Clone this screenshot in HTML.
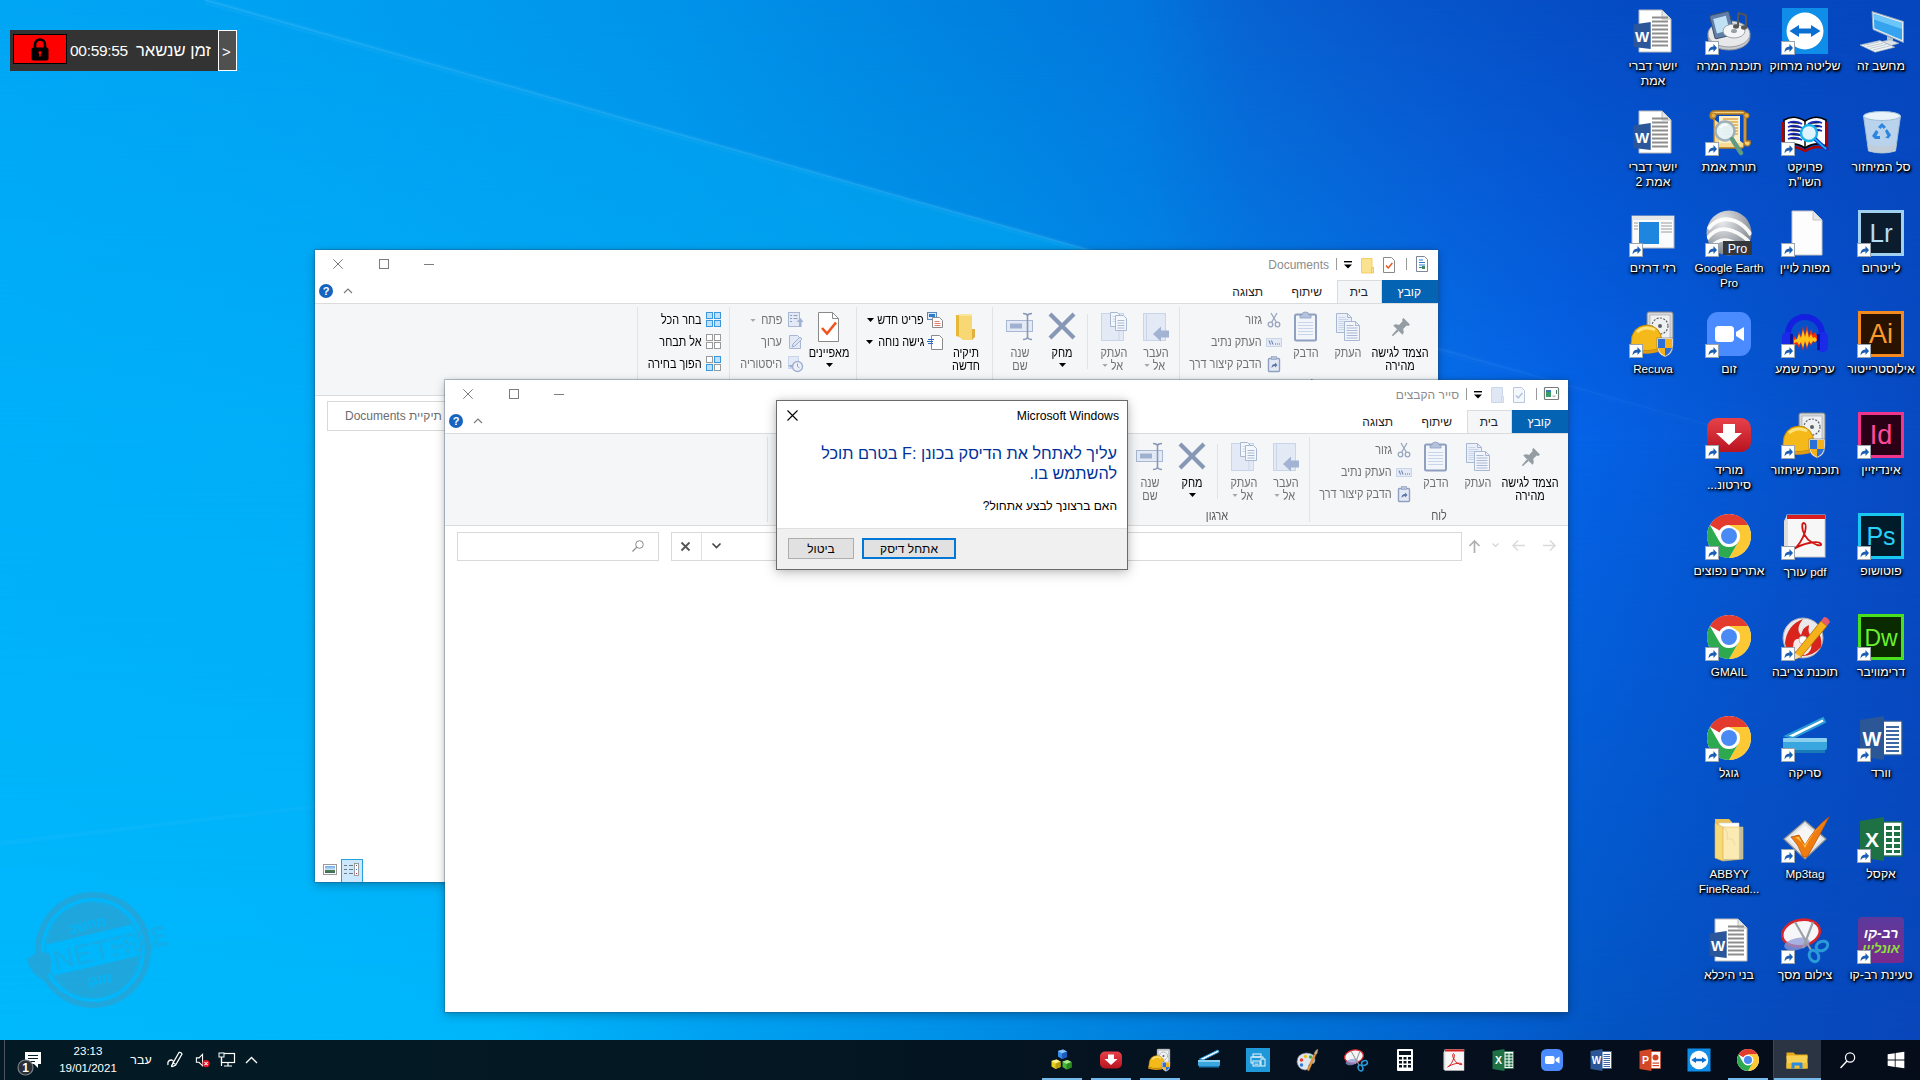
<!DOCTYPE html>
<html lang="he"><head><meta charset="utf-8"><title>Desktop</title><style>
*{box-sizing:border-box;margin:0;padding:0}
html,body{width:1920px;height:1080px;overflow:hidden}
body{font-family:"Liberation Sans",sans-serif;font-size:12px;position:relative;
 background:#0078d7;}
.abs{position:absolute}
#wall{position:absolute;left:0;top:0;width:1920px;height:1080px;background:linear-gradient(to right,rgb(0,166,244) 0px,rgb(0,162,242) 240px,rgb(0,148,235) 670px,rgb(0,130,224) 960px,rgb(3,118,220) 1140px,rgb(8,98,210) 1250px,rgb(8,86,203) 1400px,rgb(5,76,196) 1600px,rgb(6,70,190) 1920px)}
#wall2{position:absolute;left:0;top:0;width:1920px;height:1080px;background:linear-gradient(to right,rgb(0,176,249) 0px,rgb(0,174,248) 315px,rgb(0,160,240) 700px,rgb(0,150,236) 1000px,rgb(2,126,232) 1300px,rgb(6,112,236) 1440px,rgb(5,100,232) 1570px,rgb(6,86,210) 1750px,rgb(8,74,194) 1920px);-webkit-mask-image:linear-gradient(to bottom,transparent 0px,#000 440px);mask-image:linear-gradient(to bottom,transparent 0px,#000 440px)}
#wall3{position:absolute;left:0;top:0;width:1920px;height:1080px;background:linear-gradient(to right,rgb(0,184,252) 0px,rgb(0,182,251) 500px,rgb(0,162,241) 700px,rgb(0,148,234) 900px,rgb(0,132,224) 1100px,rgb(0,114,214) 1300px,rgb(3,95,205) 1500px,rgb(3,85,195) 1600px,rgb(6,76,190) 1750px,rgb(8,70,186) 1920px);-webkit-mask-image:linear-gradient(to bottom,transparent 440px,#000 1040px);mask-image:linear-gradient(to bottom,transparent 440px,#000 1040px)}
.t{position:absolute;white-space:nowrap;line-height:1}
.rtl{direction:rtl}
svg{position:absolute;overflow:visible}
/* explorer windows */
.win{position:absolute;background:#fff;}
.win .rib{position:absolute;left:0;right:0;top:53px;height:93px;background:#f5f6f7;border-top:1px solid #dadbdc;border-bottom:1px solid #dadbdc}
.win .filetab{position:absolute;right:0;top:30px;width:56px;height:23px;background:#0563b4}
.win .hometab{position:absolute;right:56px;top:30px;width:45px;height:24px;background:#f5f6f7;border:1px solid #dadbdc;border-bottom:none}
.sep{position:absolute;width:1px;background:#e2e3e4}
.box{position:absolute;border:1px solid #d9d9d9;background:#fff}

.dl{position:absolute;width:100px;text-align:center;color:#fff;font-size:12.3px;line-height:15px;direction:rtl;
 text-shadow:1px 1px 1px rgba(0,0,0,1),0 1px 3px rgba(0,0,0,0.95),0 0 4px rgba(0,0,0,0.8),1px 2px 2px rgba(0,0,0,0.7);white-space:nowrap}
.la{font-size:11.7px}
.dl.la{font-size:11.7px}

#tb{position:absolute;left:0;top:1040px;width:1920px;height:40px;
 background:linear-gradient(to right,#031a25 0px,#031924 400px,#041722 800px,#05121f 1200px,#050e1c 1600px,#050c1a 1920px)}
.run{position:absolute;top:38px;height:2px;width:40px;background:#76b9ed}

.rl{position:absolute;white-space:nowrap;font-size:13px;line-height:13px;text-align:center;direction:rtl;width:90px;transform:scaleX(.835);transform-origin:50% 50%}
.rs{position:absolute;white-space:nowrap;font-size:13px;line-height:14px;direction:rtl;text-align:right;transform:scaleX(.835);transform-origin:100% 50%}
.en{color:#000}.dis{color:#707070}
.gl{position:absolute;white-space:nowrap;font-size:13px;line-height:14px;color:#5a5a5a;width:80px;text-align:center;direction:rtl;transform:scaleX(.835);transform-origin:50% 50%}
</style></head><body><div id="wall"></div><div id="wall2"></div><div id="wall3"></div>
<svg style="left:0;top:0" width="1920" height="1080" viewBox="0 0 1920 1080">
 <defs>
  <linearGradient id="ray1" gradientUnits="userSpaceOnUse" x1="205" y1="0" x2="1920" y2="485">
   <stop offset="0" stop-color="#8fd8ff" stop-opacity="0.15"/>
   <stop offset="0.5" stop-color="#8fd8ff" stop-opacity="0.14"/>
   <stop offset="0.72" stop-color="#6fb8ff" stop-opacity="0.10"/>
   <stop offset="0.85" stop-color="#6fb8ff" stop-opacity="0.04"/>
   <stop offset="1" stop-color="#6fb8ff" stop-opacity="0"/>
  </linearGradient>
  <linearGradient id="lite" gradientUnits="userSpaceOnUse" x1="250" y1="0" x2="1100" y2="0">
   <stop offset="0" stop-color="#00c8ff" stop-opacity="0"/>
   <stop offset="0.65" stop-color="#00c8ff" stop-opacity="0.22"/>
   <stop offset="1" stop-color="#00c8ff" stop-opacity="0.30"/>
  </linearGradient>
 </defs>
 <polygon points="0,0 205,0 1110,256 1110,262 0,262" fill="url(#lite)"/>
 <line x1="205" y1="0" x2="1920" y2="485" stroke="url(#ray1)" stroke-width="1.6"/>
 <line x1="205" y1="1" x2="1920" y2="486" stroke="url(#ray1)" stroke-width="7" opacity="0.35"/>
 <polygon points="0,841 320,804 320,808 0,846" fill="#8fe0ff" opacity="0.05"/>
</svg>
<svg style="left:0px;top:860px" width="240" height="180" viewBox="0 860 240 180" opacity="0.25">
 <g transform="rotate(-13 93 950)" fill="#7d7a82" stroke="none">
  <path d="M93 892 a58 58 0 1 0 0.01 0z M93 898 a52 52 0 1 1 -0.01 0z" fill-rule="evenodd"/>
  <path d="M93 901.500 a48.500 48.500 0 1 0 0.01 0z M93 903 a47 47 0 1 1 -0.01 0z" fill-rule="evenodd"/>
  <path d="M49.500 934 A46 46 0 0 1 136.500 934 Z"/>
  <path d="M49.500 966 A46 46 0 0 0 136.500 966 Z"/>
  <path d="M27 944 q12 -7 23 0 q1 16 -11 25 q-13 -9 -12 -25z"/>
  <text x="52" y="961" font-family="Liberation Sans" font-size="27" fill-opacity="0.75" textLength="58" lengthAdjust="spacingAndGlyphs">NET</text>
  <text x="111" y="961" font-family="Liberation Sans" font-size="27" textLength="56" lengthAdjust="spacingAndGlyphs" fill="none" stroke="#7d7a82" stroke-width="0.9">FREE</text>
 </g>
 <g transform="rotate(-13 93 950)" fill="#00b3f8" font-family="Liberation Sans" font-weight="bold" font-size="13.500">
  <text x="93" y="929" text-anchor="middle" direction="rtl">מחשב</text>
  <text x="93" y="985" text-anchor="middle" direction="rtl">מוגן</text>
 </g>
</svg>
<div class="abs" style="left:10px;top:30px;width:227px;height:41px;background:#333">
 <div class="abs" style="left:3px;top:4px;width:54px;height:30px;background:#fe0000;border:1px solid #000"></div>
 <svg style="left:20px;top:7px" width="20" height="24" viewBox="0 0 20 24"><path d="M5 11 V7.5 a5 5 0 0 1 10 0 V11" fill="none" stroke="#000" stroke-width="2.6"/><rect x="1.5" y="10.5" width="17" height="13" rx="2" fill="#000"/><circle cx="10" cy="15.6" r="1.6" fill="#fe0000"/><rect x="9.2" y="16" width="1.6" height="3.6" fill="#fe0000"/></svg>
 <div class="t" style="left:60px;top:13px;font-size:15.500px;color:#fff;letter-spacing:-0.3px">00:59:55</div>
 <div class="t rtl" style="right:26px;top:13px;font-size:16.600px;color:#fff">זמן שנשאר</div>
 <div class="abs" style="left:208px;top:0;width:19px;height:41px;background:#505050;border:1px solid #fff"></div>
 <div class="t" style="left:212px;top:13.500px;font-size:15px;color:#fff">&gt;</div>
</div><svg style="left:1857px;top:7px" width="48" height="48" viewBox="0 0 48 48" ><path d="M15 4.500 L46.500 14.500 L46.500 35.500 L16 22.500 Z" fill="#e4ecf1" stroke="#8fa5b4" stroke-width="0.9"/><path d="M16.600 6.800 L45 16 L45 33 L17.400 21.200 Z" fill="#36a3ee"/><path d="M16.600 6.800 L45 16 L45 22 L17 12.500 Z" fill="#6cc6fa"/><path d="M30 29 l6 2.600 l0 4 l-6 -2 z" fill="#b4c2cc"/><path d="M25 34.500 l8 -1.800 l9 3.600 l-8 2.300 z" fill="#dbe3e8" stroke="#a4b3be" stroke-width="0.600"/><path d="M3 38 L22.800 33.600 L37.800 40.200 L18.100 45.200 Z" fill="#f2f5f7" stroke="#a4b3be" stroke-width="0.700"/><path d="M7 38.300 l15.500 -3.500 M10 39.900 l16 -3.700 M13 41.400 l16.500 -3.900 M16 43 l17 -4.100" stroke="#b9c5cd" stroke-width="0.900"/></svg><div class="dl" style="left:1831px;top:59px"><bdi>מחשב זה</bdi></div><svg style="left:1781px;top:7px" width="48" height="48" viewBox="0 0 48 48" ><rect x="1" y="1" width="46" height="46" fill="#0e8ee9"/><circle cx="24" cy="24" r="18.5" fill="#fff"/><path d="M8.5 24 l9.5 -6 v3.6 h12 v-3.6 l9.5 6 l-9.5 6 v-3.6 h-12 v3.6 z" fill="#0a6fd0"/></svg><svg style="left:1781px;top:41px" width="14" height="14" viewBox="0 0 14 14"><rect x="0.5" y="0.5" width="13" height="13" fill="#fff" stroke="#9aa4ae" stroke-width="1"/><path d="M3.5 11.5 q0 -6 5 -6 v-2.5 l3.5 4 l-3.5 4 v-2.5 q-3.5 0 -5 3z" fill="#1a5fb4"/></svg><div class="dl" style="left:1755px;top:59px"><bdi>שליטה מרחוק</bdi></div><svg style="left:1705px;top:7px" width="48" height="48" viewBox="0 0 48 48" ><ellipse cx="24" cy="30" rx="21" ry="13" fill="#c9ccd0" stroke="#8e9296" stroke-width="1"/><ellipse cx="24" cy="27" rx="21" ry="13" fill="#e6e8ea" stroke="#9a9ea2" stroke-width="1"/><rect x="7" y="6" width="20" height="24" rx="2" fill="#5f7fa8" stroke="#3c4f6c" stroke-width="1" transform="rotate(-14 17 18)"/><rect x="10" y="10" width="13" height="15" fill="#bfe0f5" transform="rotate(-14 17 18)"/><ellipse cx="29" cy="24" rx="11" ry="7" fill="#f4f5f6" stroke="#8e9296" stroke-width="0.8"/><ellipse cx="29" cy="24" rx="3" ry="2" fill="#9a9ea2"/><path d="M33 6 v13 M41 8 v12 M33 6 l8 2" stroke="#555" stroke-width="2" fill="none"/><ellipse cx="31" cy="19.5" rx="3" ry="2.2" fill="#555"/><ellipse cx="39" cy="20.5" rx="3" ry="2.2" fill="#555"/></svg><svg style="left:1705px;top:41px" width="14" height="14" viewBox="0 0 14 14"><rect x="0.5" y="0.5" width="13" height="13" fill="#fff" stroke="#9aa4ae" stroke-width="1"/><path d="M3.5 11.5 q0 -6 5 -6 v-2.5 l3.5 4 l-3.5 4 v-2.5 q-3.5 0 -5 3z" fill="#1a5fb4"/></svg><div class="dl" style="left:1679px;top:59px"><bdi>תוכנת המרה</bdi></div><svg style="left:1629px;top:7px" width="48" height="48" viewBox="0 0 48 48" ><path d="M10 3 h23 l9 9 v33 h-32 z" fill="#fff" stroke="#b9b9b9" stroke-width="1"/><path d="M33 3 v9 h9" fill="#e6e6e6" stroke="#b9b9b9" stroke-width="1"/><path d="M23 10.5 H39" stroke="#8e8e8e" stroke-width="2"/><path d="M23 14.5 H39" stroke="#8e8e8e" stroke-width="2"/><path d="M23 18.5 H39" stroke="#8e8e8e" stroke-width="2"/><path d="M23 22.5 H39" stroke="#8e8e8e" stroke-width="2"/><path d="M23 26.5 H39" stroke="#8e8e8e" stroke-width="2"/><path d="M23 30.5 H39" stroke="#8e8e8e" stroke-width="2"/><path d="M23 34.5 H39" stroke="#8e8e8e" stroke-width="2"/><path d="M23 38.5 H39" stroke="#8e8e8e" stroke-width="2"/><path d="M4.500 17.500 L21.700 15 V42 L4.500 40 Z" fill="#2b579a"/><text x="13.200" y="34.500" text-anchor="middle" font-family="Liberation Sans" font-weight="bold" font-size="15" fill="#fff">W</text></svg><div class="dl" style="left:1603px;top:59px"><bdi>יושר דברי</bdi><br><bdi>אמת</bdi></div><svg style="left:1857px;top:108px" width="48" height="48" viewBox="0 0 48 48" ><path d="M6.500 8 L43.500 8 L38.500 43 Q25 47 11.500 43 Z" fill="#d4e6f3" fill-opacity="0.88" stroke="#9dbdd6" stroke-width="1"/><ellipse cx="25" cy="8" rx="18.500" ry="4.500" fill="#eaf3fa" stroke="#9dbdd6" stroke-width="1"/><path d="M11.500 43 Q25 47 38.500 43 L39.500 36 Q25 41 10.500 36 Z" fill="#c2cdd6" fill-opacity="0.85"/><g fill="#2a86e0"><path d="M21 19 l4 -4 l4 4 l-2.500 2 l-1.500 -2 l-1.500 2z"/><path d="M30 21 l4 6 l-2.500 3.500 l-3.500 -1 l2.500 -1.500 l-2.500 -5z"/><path d="M19 22 l-4 6 l3 3 h5 v-3 h-3.500 l2 -4z"/></g></svg><div class="dl" style="left:1831px;top:160px"><bdi>סל המיחזור</bdi></div><svg style="left:1781px;top:108px" width="48" height="48" viewBox="0 0 48 48" ><path d="M3 12 Q13 6 24 13 Q35 6 45 12 V38 Q35 33 24 40 Q13 33 3 38 Z" fill="#fff" stroke="#000" stroke-width="1.6"/><path d="M2 14 v27 Q13 36 24 43 Q35 36 46 41 V14" fill="none" stroke="#b00000" stroke-width="2.4"/><path d="M24 13 V40" stroke="#000" stroke-width="1.4"/><g stroke="#1a2fc0" stroke-width="1.8"><path d="M7 15 q7 -3 14 1 M7 19 q7 -3 14 1 M7 23 q7 -3 14 1 M7 27 q7 -3 14 1 M7 31 q7 -3 14 1 M27 16 q7 -4 14 -1 M27 20 q7 -4 14 -1 M27 24 q7 -4 14 -1"/></g><circle cx="28" cy="25" r="8" fill="#dff3ff" stroke="#18b6e8" stroke-width="2.4"/><path d="M34 31 L46 42" stroke="#0b3fd0" stroke-width="4"/><path d="M34 31 L45 41" stroke="#29c4f0" stroke-width="1.4"/></svg><svg style="left:1781px;top:142px" width="14" height="14" viewBox="0 0 14 14"><rect x="0.5" y="0.5" width="13" height="13" fill="#fff" stroke="#9aa4ae" stroke-width="1"/><path d="M3.5 11.5 q0 -6 5 -6 v-2.5 l3.5 4 l-3.5 4 v-2.5 q-3.5 0 -5 3z" fill="#1a5fb4"/></svg><div class="dl" style="left:1755px;top:160px"><bdi>פרויקט</bdi><br><bdi>השו"ת</bdi></div><svg style="left:1705px;top:108px" width="48" height="48" viewBox="0 0 48 48" ><path d="M9 6 H39 V34 Q39 38 43 38 Q46 37 45 33 H41 V8 Q41 3 36 3 H10 Q5 3 5 8 Q5 11 9 11 Z" fill="#f3d27c" stroke="#b5771a" stroke-width="1.3"/><path d="M9 11 V36 Q9 40 13 40 H37 Q39 40 39 36" fill="#f7dc92" stroke="#b5771a" stroke-width="1.3"/><circle cx="8.500" cy="7.500" r="2.600" fill="#e2ae48" stroke="#b5771a" stroke-width="1"/><circle cx="41.500" cy="7.500" r="2.600" fill="#e2ae48" stroke="#b5771a" stroke-width="1"/><rect x="14" y="8" width="21" height="27" fill="#fbefc8"/><path d="M18 11 H33" stroke="#d8962e" stroke-width="1.2"/><path d="M18 14 H33" stroke="#d8962e" stroke-width="1.2"/><path d="M18 17 H33" stroke="#d8962e" stroke-width="1.2"/><path d="M18 20 H33" stroke="#d8962e" stroke-width="1.2"/><path d="M18 23 H33" stroke="#d8962e" stroke-width="1.2"/><path d="M18 26 H33" stroke="#d8962e" stroke-width="1.2"/><circle cx="20" cy="23" r="9.500" fill="#e4f3fa" fill-opacity="0.92" stroke="#9fb0b8" stroke-width="2.400"/><path d="M15 20 q3 -4 8 -3" stroke="#fff" stroke-width="1.600" fill="none"/><path d="M27 31 L36 45" stroke="#5f9a84" stroke-width="4.500" stroke-linecap="round"/></svg><svg style="left:1705px;top:142px" width="14" height="14" viewBox="0 0 14 14"><rect x="0.5" y="0.5" width="13" height="13" fill="#fff" stroke="#9aa4ae" stroke-width="1"/><path d="M3.5 11.5 q0 -6 5 -6 v-2.5 l3.5 4 l-3.5 4 v-2.5 q-3.5 0 -5 3z" fill="#1a5fb4"/></svg><div class="dl" style="left:1679px;top:160px"><bdi>תורת אמת</bdi></div><svg style="left:1629px;top:108px" width="48" height="48" viewBox="0 0 48 48" ><path d="M10 3 h23 l9 9 v33 h-32 z" fill="#fff" stroke="#b9b9b9" stroke-width="1"/><path d="M33 3 v9 h9" fill="#e6e6e6" stroke="#b9b9b9" stroke-width="1"/><path d="M23 10.5 H39" stroke="#8e8e8e" stroke-width="2"/><path d="M23 14.5 H39" stroke="#8e8e8e" stroke-width="2"/><path d="M23 18.5 H39" stroke="#8e8e8e" stroke-width="2"/><path d="M23 22.5 H39" stroke="#8e8e8e" stroke-width="2"/><path d="M23 26.5 H39" stroke="#8e8e8e" stroke-width="2"/><path d="M23 30.5 H39" stroke="#8e8e8e" stroke-width="2"/><path d="M23 34.5 H39" stroke="#8e8e8e" stroke-width="2"/><path d="M23 38.5 H39" stroke="#8e8e8e" stroke-width="2"/><path d="M4.500 17.500 L21.700 15 V42 L4.500 40 Z" fill="#2b579a"/><text x="13.200" y="34.500" text-anchor="middle" font-family="Liberation Sans" font-weight="bold" font-size="15" fill="#fff">W</text></svg><div class="dl" style="left:1603px;top:160px"><bdi>יושר דברי</bdi><br><bdi>אמת 2</bdi></div><svg style="left:1857px;top:209px" width="48" height="48" viewBox="0 0 48 48" ><rect x="1" y="1" width="46" height="46" fill="#9fd0f0"/><rect x="4" y="4" width="40" height="40" fill="#0a1c2e"/><text x="24" y="33" text-anchor="middle" font-family="Liberation Sans" font-size="26" fill="#b4dcf5">Lr</text></svg><svg style="left:1857px;top:243px" width="14" height="14" viewBox="0 0 14 14"><rect x="0.5" y="0.5" width="13" height="13" fill="#fff" stroke="#9aa4ae" stroke-width="1"/><path d="M3.5 11.5 q0 -6 5 -6 v-2.5 l3.5 4 l-3.5 4 v-2.5 q-3.5 0 -5 3z" fill="#1a5fb4"/></svg><div class="dl" style="left:1831px;top:261px"><bdi>לייטרום</bdi></div><svg style="left:1781px;top:209px" width="48" height="48" viewBox="0 0 48 48" ><path d="M11 2 h21 l9 9 v35 h-30 z" fill="#fdfdfd" stroke="#c4c4c4" stroke-width="1"/><path d="M32 2 v9 h9" fill="#e6e6e6" stroke="#c4c4c4" stroke-width="1"/></svg><svg style="left:1781px;top:243px" width="14" height="14" viewBox="0 0 14 14"><rect x="0.5" y="0.5" width="13" height="13" fill="#fff" stroke="#9aa4ae" stroke-width="1"/><path d="M3.5 11.5 q0 -6 5 -6 v-2.5 l3.5 4 l-3.5 4 v-2.5 q-3.5 0 -5 3z" fill="#1a5fb4"/></svg><div class="dl" style="left:1755px;top:261px"><bdi>מפות לויין</bdi></div><svg style="left:1705px;top:209px" width="48" height="48" viewBox="0 0 48 48" ><defs><radialGradient id="ge" cx="0.35" cy="0.25" r="0.9"><stop offset="0" stop-color="#e8eaec"/><stop offset="0.55" stop-color="#a4a9af"/><stop offset="1" stop-color="#6a7076"/></radialGradient><clipPath id="gec"><circle cx="24" cy="24" r="22.500"/></clipPath></defs><circle cx="24" cy="24" r="22.500" fill="url(#ge)"/><g clip-path="url(#gec)"><path d="M3 20 Q14 6 30 12 Q40 16 46 26" stroke="#fff" stroke-width="4" fill="none" opacity="0.92"/><path d="M2 30 Q12 16 28 22 Q38 26 45 34" stroke="#fff" stroke-width="3.600" fill="none" opacity="0.92"/><path d="M6 38 Q14 28 26 32 Q32 34 36 40" stroke="#fff" stroke-width="3" fill="none" opacity="0.9"/></g><rect x="18" y="32" width="29" height="14" fill="#34383c"/><text x="32.500" y="43.500" text-anchor="middle" font-family="Liberation Sans" font-size="12.500" fill="#fff">Pro</text></svg><svg style="left:1705px;top:243px" width="14" height="14" viewBox="0 0 14 14"><rect x="0.5" y="0.5" width="13" height="13" fill="#fff" stroke="#9aa4ae" stroke-width="1"/><path d="M3.5 11.5 q0 -6 5 -6 v-2.5 l3.5 4 l-3.5 4 v-2.5 q-3.5 0 -5 3z" fill="#1a5fb4"/></svg><div class="dl la" style="left:1679px;top:260px"><bdi>Google Earth</bdi><br><bdi>Pro</bdi></div><svg style="left:1629px;top:209px" width="48" height="48" viewBox="0 0 48 48" ><rect x="3" y="7" width="42" height="32" fill="#fbfbfb" stroke="#b8bcc0" stroke-width="1"/><rect x="3" y="7" width="42" height="4" fill="#e4e6e8"/><rect x="10" y="13" width="20" height="22" fill="#1f86e0"/><path d="M32 14 H43" stroke="#a8acb0" stroke-width="1.2"/><path d="M32 17 H43" stroke="#a8acb0" stroke-width="1.2"/><path d="M32 20 H43" stroke="#a8acb0" stroke-width="1.2"/><path d="M32 23 H43" stroke="#a8acb0" stroke-width="1.2"/><path d="M5 14 H9" stroke="#a8acb0" stroke-width="1.2"/><path d="M5 17 H9" stroke="#a8acb0" stroke-width="1.2"/><path d="M5 20 H9" stroke="#a8acb0" stroke-width="1.2"/></svg><svg style="left:1629px;top:243px" width="14" height="14" viewBox="0 0 14 14"><rect x="0.5" y="0.5" width="13" height="13" fill="#fff" stroke="#9aa4ae" stroke-width="1"/><path d="M3.5 11.5 q0 -6 5 -6 v-2.5 l3.5 4 l-3.5 4 v-2.5 q-3.5 0 -5 3z" fill="#1a5fb4"/></svg><div class="dl" style="left:1603px;top:261px"><bdi>רזי דרזים</bdi></div><svg style="left:1857px;top:310px" width="48" height="48" viewBox="0 0 48 48" ><rect x="1" y="1" width="46" height="46" fill="#f58a1f"/><rect x="4" y="4" width="40" height="40" fill="#2a1200"/><text x="24" y="33" text-anchor="middle" font-family="Liberation Sans" font-size="27" fill="#ff9a2a">Ai</text></svg><svg style="left:1857px;top:344px" width="14" height="14" viewBox="0 0 14 14"><rect x="0.5" y="0.5" width="13" height="13" fill="#fff" stroke="#9aa4ae" stroke-width="1"/><path d="M3.5 11.5 q0 -6 5 -6 v-2.5 l3.5 4 l-3.5 4 v-2.5 q-3.5 0 -5 3z" fill="#1a5fb4"/></svg><div class="dl" style="left:1831px;top:362px"><bdi>אילוסטרייטור</bdi></div><svg style="left:1781px;top:310px" width="48" height="48" viewBox="0 0 48 48" ><path d="M7 31 V24 a17 17 0 0 1 34 0 V31" fill="none" stroke="#1420e0" stroke-width="6"/><rect x="1" y="22" width="11" height="20" rx="5" fill="#1a2ae8"/><rect x="36" y="22" width="11" height="20" rx="5" fill="#1a2ae8"/><rect x="9" y="24" width="3" height="16" fill="#0a14a0"/><rect x="36" y="24" width="3" height="16" fill="#0a14a0"/><path d="M12 29 l2 -3 l2 4 l2 -9 l2 6 l2 -11 l2 9 l2 -10 l2 11 l2 -7 l2 6 l2 -3 l2 4 v4 l-2 3 l-2 -2 l-2 5 l-2 -4 l-2 8 l-2 -9 l-2 10 l-2 -8 l-2 5 l-2 -4 l-2 3 l-2 -3 z" fill="#f0300c"/><path d="M13 30 l3 -1 l2 -5 l2 4 l2 -8 l2 7 l2 -7 l2 8 l2 -4 l2 4 l2 -1 l2 3 l-2 2 l-2 -1 l-2 3 l-2 -3 l-2 6 l-2 -6 l-2 7 l-2 -6 l-2 3 l-2 -3 l-3 1z" fill="#ffc21a"/></svg><svg style="left:1781px;top:344px" width="14" height="14" viewBox="0 0 14 14"><rect x="0.5" y="0.5" width="13" height="13" fill="#fff" stroke="#9aa4ae" stroke-width="1"/><path d="M3.5 11.5 q0 -6 5 -6 v-2.5 l3.5 4 l-3.5 4 v-2.5 q-3.5 0 -5 3z" fill="#1a5fb4"/></svg><div class="dl" style="left:1755px;top:362px"><bdi>עריכת שמע</bdi></div><svg style="left:1705px;top:310px" width="48" height="48" viewBox="0 0 48 48" ><rect x="2" y="2" width="44" height="44" rx="11" fill="#4a8cff"/><rect x="10" y="16" width="19" height="16" rx="3.5" fill="#fff"/><path d="M31 22 l8 -5 v14 l-8 -5 z" fill="#fff"/></svg><svg style="left:1705px;top:344px" width="14" height="14" viewBox="0 0 14 14"><rect x="0.5" y="0.5" width="13" height="13" fill="#fff" stroke="#9aa4ae" stroke-width="1"/><path d="M3.5 11.5 q0 -6 5 -6 v-2.5 l3.5 4 l-3.5 4 v-2.5 q-3.5 0 -5 3z" fill="#1a5fb4"/></svg><div class="dl" style="left:1679px;top:362px"><bdi>זום</bdi></div><svg style="left:1629px;top:310px" width="48" height="48" viewBox="0 0 48 48" ><rect x="18" y="2" width="26" height="34" rx="2" fill="#d4d7da" stroke="#7d8286" stroke-width="1"/><rect x="21" y="5" width="20" height="24" fill="#eef0f1" stroke="#9da1a5" stroke-width="0.6"/><circle cx="31" cy="16" r="8" fill="none" stroke="#5c6064" stroke-width="1.2" stroke-dasharray="2 1.4"/><circle cx="31" cy="16" r="2" fill="#5c6064"/><path d="M2 34 Q2 16 18 15 Q32 16 33 32 L34 37 Q18 44 1 38 Z" fill="#f5b91a" stroke="#c28a08" stroke-width="1"/><path d="M8 22 Q16 15 26 20" stroke="#ffe27a" stroke-width="3" fill="none"/><path d="M1 38 Q18 44 34 37 L35 40 Q18 47 0 41 Z" fill="#e09c10"/><path d="M28 28 h16 v8 q0 8 -8 11 q-8 -3 -8 -11 z" fill="#fff" stroke="#666" stroke-width="0.6"/><path d="M29 29 h7 v9 h-7z" fill="#2a6fd8"/><path d="M36 29 h7 v9 h-7z" fill="#f5b01a"/><path d="M29 38 h7 v8 q-6 -3 -7 -8z" fill="#f5b01a"/><path d="M36 38 h7 q-1 5 -7 8z" fill="#2a6fd8"/></svg><svg style="left:1629px;top:344px" width="14" height="14" viewBox="0 0 14 14"><rect x="0.5" y="0.5" width="13" height="13" fill="#fff" stroke="#9aa4ae" stroke-width="1"/><path d="M3.5 11.5 q0 -6 5 -6 v-2.5 l3.5 4 l-3.5 4 v-2.5 q-3.5 0 -5 3z" fill="#1a5fb4"/></svg><div class="dl la" style="left:1603px;top:361px"><bdi>Recuva</bdi></div><svg style="left:1857px;top:411px" width="48" height="48" viewBox="0 0 48 48" ><rect x="1" y="1" width="46" height="46" fill="#f0368c"/><rect x="4" y="4" width="40" height="40" fill="#2a0016"/><text x="24" y="33" text-anchor="middle" font-family="Liberation Sans" font-size="27" fill="#ff4a9c">Id</text></svg><svg style="left:1857px;top:445px" width="14" height="14" viewBox="0 0 14 14"><rect x="0.5" y="0.5" width="13" height="13" fill="#fff" stroke="#9aa4ae" stroke-width="1"/><path d="M3.5 11.5 q0 -6 5 -6 v-2.5 l3.5 4 l-3.5 4 v-2.5 q-3.5 0 -5 3z" fill="#1a5fb4"/></svg><div class="dl" style="left:1831px;top:463px"><bdi>אינדיזיין</bdi></div><svg style="left:1781px;top:411px" width="48" height="48" viewBox="0 0 48 48" ><rect x="18" y="2" width="26" height="34" rx="2" fill="#d4d7da" stroke="#7d8286" stroke-width="1"/><rect x="21" y="5" width="20" height="24" fill="#eef0f1" stroke="#9da1a5" stroke-width="0.6"/><circle cx="31" cy="16" r="8" fill="none" stroke="#5c6064" stroke-width="1.2" stroke-dasharray="2 1.4"/><circle cx="31" cy="16" r="2" fill="#5c6064"/><path d="M2 34 Q2 16 18 15 Q32 16 33 32 L34 37 Q18 44 1 38 Z" fill="#f5b91a" stroke="#c28a08" stroke-width="1"/><path d="M8 22 Q16 15 26 20" stroke="#ffe27a" stroke-width="3" fill="none"/><path d="M1 38 Q18 44 34 37 L35 40 Q18 47 0 41 Z" fill="#e09c10"/><path d="M28 28 h16 v8 q0 8 -8 11 q-8 -3 -8 -11 z" fill="#fff" stroke="#666" stroke-width="0.6"/><path d="M29 29 h7 v9 h-7z" fill="#2a6fd8"/><path d="M36 29 h7 v9 h-7z" fill="#f5b01a"/><path d="M29 38 h7 v8 q-6 -3 -7 -8z" fill="#f5b01a"/><path d="M36 38 h7 q-1 5 -7 8z" fill="#2a6fd8"/></svg><svg style="left:1781px;top:445px" width="14" height="14" viewBox="0 0 14 14"><rect x="0.5" y="0.5" width="13" height="13" fill="#fff" stroke="#9aa4ae" stroke-width="1"/><path d="M3.5 11.5 q0 -6 5 -6 v-2.5 l3.5 4 l-3.5 4 v-2.5 q-3.5 0 -5 3z" fill="#1a5fb4"/></svg><div class="dl" style="left:1755px;top:463px"><bdi>תוכנת שיחזור</bdi></div><svg style="left:1705px;top:411px" width="48" height="48" viewBox="0 0 48 48" ><defs><linearGradient id="rd" x1="0" y1="0" x2="0" y2="1"><stop offset="0" stop-color="#e8414a"/><stop offset="1" stop-color="#b81420"/></linearGradient></defs><rect x="2" y="7" width="44" height="34" rx="10" fill="url(#rd)"/><path d="M18 13 h12 v9 h7 l-13 12 l-13 -12 h7 z" fill="#fff"/></svg><svg style="left:1705px;top:445px" width="14" height="14" viewBox="0 0 14 14"><rect x="0.5" y="0.5" width="13" height="13" fill="#fff" stroke="#9aa4ae" stroke-width="1"/><path d="M3.5 11.5 q0 -6 5 -6 v-2.5 l3.5 4 l-3.5 4 v-2.5 q-3.5 0 -5 3z" fill="#1a5fb4"/></svg><div class="dl" style="left:1679px;top:463px"><bdi>מוריד</bdi><br><bdi>סירטונ...</bdi></div><svg style="left:1857px;top:512px" width="48" height="48" viewBox="0 0 48 48" ><rect x="1" y="1" width="46" height="46" fill="#18c8f0"/><rect x="4" y="4" width="40" height="40" fill="#001c2a"/><text x="24" y="33" text-anchor="middle" font-family="Liberation Sans" font-size="25" fill="#2ad0f8">Ps</text></svg><svg style="left:1857px;top:546px" width="14" height="14" viewBox="0 0 14 14"><rect x="0.5" y="0.5" width="13" height="13" fill="#fff" stroke="#9aa4ae" stroke-width="1"/><path d="M3.5 11.5 q0 -6 5 -6 v-2.5 l3.5 4 l-3.5 4 v-2.5 q-3.5 0 -5 3z" fill="#1a5fb4"/></svg><div class="dl" style="left:1831px;top:564px"><bdi>פוטושופ</bdi></div><svg style="left:1781px;top:512px" width="48" height="48" viewBox="0 0 48 48" ><rect x="6" y="3" width="38" height="42" fill="#f7f7f7" stroke="#c8c8c8" stroke-width="1"/><rect x="6" y="3" width="38" height="4" fill="#d81e1e"/><path d="M6 3 l-3 6 v34 l3 2" fill="#dcdcdc"/><path d="M12 38 q8 -6 12 -18 q2 -8 -1 -9 q-3 0 -1 8 q3 10 14 14 q5 1 4 -1 q-2 -3 -12 -1 q-9 2 -15 6 q-3 2 -1 1z" fill="none" stroke="#d01414" stroke-width="1.8"/></svg><svg style="left:1781px;top:546px" width="14" height="14" viewBox="0 0 14 14"><rect x="0.5" y="0.5" width="13" height="13" fill="#fff" stroke="#9aa4ae" stroke-width="1"/><path d="M3.5 11.5 q0 -6 5 -6 v-2.5 l3.5 4 l-3.5 4 v-2.5 q-3.5 0 -5 3z" fill="#1a5fb4"/></svg><div class="dl" style="left:1755px;top:564px"><span dir="rtl"><span class="la">pdf</span> עורך</span></div><svg style="left:1705px;top:512px" width="48" height="48" viewBox="0 0 48 48" ><circle cx="24" cy="24" r="22" fill="#fff"/><path d="M24 2 A22 22 0 0 1 43.05 13 L24 13 A11 11 0 0 0 14.47 18.5 L4.95 13 A22 22 0 0 1 24 2 Z" fill="#e33b2e"/><path d="M43.05 13 A22 22 0 0 1 24 46 L33.53 29.5 A11 11 0 0 0 33.53 18.5 L24 13 Z" fill="#fcc934"/><path d="M43.05 13 L24 13 L33.53 18.5 Z" fill="#fcc934"/><path d="M4.95 13 L14.47 29.5 A11 11 0 0 0 33.53 29.5 L24 46 A22 22 0 0 1 4.95 13 Z" fill="#2da94f"/><circle cx="24" cy="24" r="10" fill="#fff"/><circle cx="24" cy="24" r="8" fill="#4a8af4"/></svg><svg style="left:1705px;top:546px" width="14" height="14" viewBox="0 0 14 14"><rect x="0.5" y="0.5" width="13" height="13" fill="#fff" stroke="#9aa4ae" stroke-width="1"/><path d="M3.5 11.5 q0 -6 5 -6 v-2.5 l3.5 4 l-3.5 4 v-2.5 q-3.5 0 -5 3z" fill="#1a5fb4"/></svg><div class="dl" style="left:1679px;top:564px"><bdi>אתרים נפוצים</bdi></div><svg style="left:1857px;top:613px" width="48" height="48" viewBox="0 0 48 48" ><rect x="1" y="1" width="46" height="46" fill="#4be01e"/><rect x="4" y="4" width="40" height="40" fill="#0a2a00"/><text x="24" y="33" text-anchor="middle" font-family="Liberation Sans" font-size="23" fill="#6af032">Dw</text></svg><svg style="left:1857px;top:647px" width="14" height="14" viewBox="0 0 14 14"><rect x="0.5" y="0.5" width="13" height="13" fill="#fff" stroke="#9aa4ae" stroke-width="1"/><path d="M3.5 11.5 q0 -6 5 -6 v-2.5 l3.5 4 l-3.5 4 v-2.5 q-3.5 0 -5 3z" fill="#1a5fb4"/></svg><div class="dl" style="left:1831px;top:665px"><bdi>דרימוויבר</bdi></div><svg style="left:1781px;top:613px" width="48" height="48" viewBox="0 0 48 48" ><circle cx="22" cy="25" r="20" fill="#e9e9ec" stroke="#a9a9ae" stroke-width="1"/><path d="M4 30 Q6 12 22 6 Q14 16 20 22 Q22 14 28 12 Q26 22 32 24 Q36 20 34 14 Q42 24 40 34 Q30 46 12 42 Q5 38 4 30 Z" fill="#d8241c"/><path d="M12 34 Q12 24 20 26 Q24 32 30 30 Q32 38 24 42 Q14 42 12 34z" fill="#fff" opacity="0.9"/><circle cx="22" cy="27" r="4" fill="#fff" stroke="#b0b0b0" stroke-width="0.8"/><path d="M14 40 L40 8 L46 13 L20 44 L12 47 Z" fill="#f5b21a" stroke="#a8700a" stroke-width="0.8"/><path d="M40 8 l3 -4 q4 0 6 5 l-3 4z" fill="#e85a6a"/><path d="M14 40 l6 4 l-8 3z" fill="#f3d9b0"/></svg><svg style="left:1781px;top:647px" width="14" height="14" viewBox="0 0 14 14"><rect x="0.5" y="0.5" width="13" height="13" fill="#fff" stroke="#9aa4ae" stroke-width="1"/><path d="M3.5 11.5 q0 -6 5 -6 v-2.5 l3.5 4 l-3.5 4 v-2.5 q-3.5 0 -5 3z" fill="#1a5fb4"/></svg><div class="dl" style="left:1755px;top:665px"><bdi>תוכנת צריבה</bdi></div><svg style="left:1705px;top:613px" width="48" height="48" viewBox="0 0 48 48" ><circle cx="24" cy="24" r="22" fill="#fff"/><path d="M24 2 A22 22 0 0 1 43.05 13 L24 13 A11 11 0 0 0 14.47 18.5 L4.95 13 A22 22 0 0 1 24 2 Z" fill="#e33b2e"/><path d="M43.05 13 A22 22 0 0 1 24 46 L33.53 29.5 A11 11 0 0 0 33.53 18.5 L24 13 Z" fill="#fcc934"/><path d="M43.05 13 L24 13 L33.53 18.5 Z" fill="#fcc934"/><path d="M4.95 13 L14.47 29.5 A11 11 0 0 0 33.53 29.5 L24 46 A22 22 0 0 1 4.95 13 Z" fill="#2da94f"/><circle cx="24" cy="24" r="10" fill="#fff"/><circle cx="24" cy="24" r="8" fill="#4a8af4"/></svg><svg style="left:1705px;top:647px" width="14" height="14" viewBox="0 0 14 14"><rect x="0.5" y="0.5" width="13" height="13" fill="#fff" stroke="#9aa4ae" stroke-width="1"/><path d="M3.5 11.5 q0 -6 5 -6 v-2.5 l3.5 4 l-3.5 4 v-2.5 q-3.5 0 -5 3z" fill="#1a5fb4"/></svg><div class="dl la" style="left:1679px;top:664px"><bdi>GMAIL</bdi></div><svg style="left:1857px;top:714px" width="48" height="48" viewBox="0 0 48 48" ><rect x="22" y="7" width="23" height="34" fill="#fff" stroke="#2b5797" stroke-width="1.4"/><path d="M29 13 H42" stroke="#2b5797" stroke-width="1.8"/><path d="M29 17 H42" stroke="#2b5797" stroke-width="1.8"/><path d="M29 21 H42" stroke="#2b5797" stroke-width="1.8"/><path d="M29 25 H42" stroke="#2b5797" stroke-width="1.8"/><path d="M29 29 H42" stroke="#2b5797" stroke-width="1.8"/><path d="M29 33 H42" stroke="#2b5797" stroke-width="1.8"/><path d="M29 37 H42" stroke="#2b5797" stroke-width="1.8"/><path d="M3 6 L27 2 V46 L3 42 Z" fill="#2b5797"/><text x="15" y="32" text-anchor="middle" font-family="Liberation Sans" font-weight="bold" font-size="20" fill="#fff">W</text></svg><svg style="left:1857px;top:748px" width="14" height="14" viewBox="0 0 14 14"><rect x="0.5" y="0.5" width="13" height="13" fill="#fff" stroke="#9aa4ae" stroke-width="1"/><path d="M3.5 11.5 q0 -6 5 -6 v-2.5 l3.5 4 l-3.5 4 v-2.5 q-3.5 0 -5 3z" fill="#1a5fb4"/></svg><div class="dl" style="left:1831px;top:766px"><bdi>וורד</bdi></div><svg style="left:1781px;top:714px" width="48" height="48" viewBox="0 0 48 48" ><path d="M5 22 L42 4 L44 8 L12 24 Z" fill="#fff" stroke="#2a9ad8" stroke-width="2"/><rect x="2" y="24" width="44" height="12" rx="2" fill="#3aa6e0"/><rect x="2" y="24" width="44" height="4" rx="1" fill="#8cd0f0"/><rect x="4" y="36" width="40" height="3" fill="#1a7ab8"/></svg><svg style="left:1781px;top:748px" width="14" height="14" viewBox="0 0 14 14"><rect x="0.5" y="0.5" width="13" height="13" fill="#fff" stroke="#9aa4ae" stroke-width="1"/><path d="M3.5 11.5 q0 -6 5 -6 v-2.5 l3.5 4 l-3.5 4 v-2.5 q-3.5 0 -5 3z" fill="#1a5fb4"/></svg><div class="dl" style="left:1755px;top:766px"><bdi>סריקה</bdi></div><svg style="left:1705px;top:714px" width="48" height="48" viewBox="0 0 48 48" ><circle cx="24" cy="24" r="22" fill="#fff"/><path d="M24 2 A22 22 0 0 1 43.05 13 L24 13 A11 11 0 0 0 14.47 18.5 L4.95 13 A22 22 0 0 1 24 2 Z" fill="#e33b2e"/><path d="M43.05 13 A22 22 0 0 1 24 46 L33.53 29.5 A11 11 0 0 0 33.53 18.5 L24 13 Z" fill="#fcc934"/><path d="M43.05 13 L24 13 L33.53 18.5 Z" fill="#fcc934"/><path d="M4.95 13 L14.47 29.5 A11 11 0 0 0 33.53 29.5 L24 46 A22 22 0 0 1 4.95 13 Z" fill="#2da94f"/><circle cx="24" cy="24" r="10" fill="#fff"/><circle cx="24" cy="24" r="8" fill="#4a8af4"/></svg><svg style="left:1705px;top:748px" width="14" height="14" viewBox="0 0 14 14"><rect x="0.5" y="0.5" width="13" height="13" fill="#fff" stroke="#9aa4ae" stroke-width="1"/><path d="M3.5 11.5 q0 -6 5 -6 v-2.5 l3.5 4 l-3.5 4 v-2.5 q-3.5 0 -5 3z" fill="#1a5fb4"/></svg><div class="dl" style="left:1679px;top:766px"><bdi>גוגל</bdi></div><svg style="left:1857px;top:815px" width="48" height="48" viewBox="0 0 48 48" ><rect x="22" y="7" width="23" height="34" fill="#fff" stroke="#1e7145" stroke-width="1.4"/><g fill="#1e7145"><rect x="29" y="11" width="6" height="4"/><rect x="37" y="11" width="6" height="4"/><rect x="29" y="17" width="6" height="4"/><rect x="37" y="17" width="6" height="4"/><rect x="29" y="23" width="6" height="4"/><rect x="37" y="23" width="6" height="4"/><rect x="29" y="29" width="6" height="4"/><rect x="37" y="29" width="6" height="4"/><rect x="29" y="35" width="6" height="3"/><rect x="37" y="35" width="6" height="3"/></g><path d="M3 6 L27 2 V46 L3 42 Z" fill="#1e7145"/><text x="15" y="32" text-anchor="middle" font-family="Liberation Sans" font-weight="bold" font-size="21" fill="#fff">X</text></svg><svg style="left:1857px;top:849px" width="14" height="14" viewBox="0 0 14 14"><rect x="0.5" y="0.5" width="13" height="13" fill="#fff" stroke="#9aa4ae" stroke-width="1"/><path d="M3.5 11.5 q0 -6 5 -6 v-2.5 l3.5 4 l-3.5 4 v-2.5 q-3.5 0 -5 3z" fill="#1a5fb4"/></svg><div class="dl" style="left:1831px;top:867px"><bdi>אקסל</bdi></div><svg style="left:1781px;top:815px" width="48" height="48" viewBox="0 0 48 48" ><path d="M24 6 L45 24 L24 44 L3 24 Z" fill="#e4e5e7" stroke="#8e9094" stroke-width="1.2"/><path d="M24 10 L40 24 L24 39 L8 24 Z" fill="#f6f6f7"/><path d="M10 22 L18 20 L24 30 Q34 12 48 2 Q40 18 26 42 L22 42 Q18 30 10 22 Z" fill="#f07c10" stroke="#b8500a" stroke-width="0.8"/><path d="M14 22 L18 22 L24 33 Q32 16 44 6 Q34 14 24 30 Z" fill="#ffc040"/></svg><svg style="left:1781px;top:849px" width="14" height="14" viewBox="0 0 14 14"><rect x="0.5" y="0.5" width="13" height="13" fill="#fff" stroke="#9aa4ae" stroke-width="1"/><path d="M3.5 11.5 q0 -6 5 -6 v-2.5 l3.5 4 l-3.5 4 v-2.5 q-3.5 0 -5 3z" fill="#1a5fb4"/></svg><div class="dl la" style="left:1755px;top:866px"><bdi>Mp3tag</bdi></div><svg style="left:1705px;top:815px" width="48" height="48" viewBox="0 0 48 48" ><path d="M10 4 h14 l3 3 v36 h-17 z" fill="#e9c05a"/><path d="M14 8 h20 v36 h-20z" fill="#fff" stroke="#d5d5d5" stroke-width="0.6"/><path d="M18 12 q6 4 4 12 q6 -2 8 6" stroke="#c8ccd0" stroke-width="1.4" fill="none"/><path d="M10 8 l8 4 v34 l-8 -3z" fill="#f8d97a" stroke="#dcb24a" stroke-width="0.6"/><path d="M18 12 h20 v32 l-20 2z" fill="#fbe39a" fill-opacity="0.75" stroke="#e4c060" stroke-width="0.6"/></svg><div class="dl la" style="left:1679px;top:866px"><bdi>ABBYY</bdi><br><bdi>FineRead...</bdi></div><svg style="left:1857px;top:916px" width="48" height="48" viewBox="0 0 48 48" ><defs><linearGradient id="rk" x1="0" y1="0" x2="0" y2="1"><stop offset="0" stop-color="#5a3a9c"/><stop offset="1" stop-color="#7a2a8c"/></linearGradient></defs><rect x="1" y="1" width="46" height="46" rx="4" fill="url(#rk)"/><text x="24" y="22" text-anchor="middle" font-family="Liberation Sans" font-weight="bold" font-style="italic" font-size="14" fill="#fff">רב-קו</text><text x="24" y="37" text-anchor="middle" font-family="Liberation Sans" font-weight="bold" font-style="italic" font-size="13" fill="#8ee03a">אונליין</text></svg><svg style="left:1857px;top:950px" width="14" height="14" viewBox="0 0 14 14"><rect x="0.5" y="0.5" width="13" height="13" fill="#fff" stroke="#9aa4ae" stroke-width="1"/><path d="M3.5 11.5 q0 -6 5 -6 v-2.5 l3.5 4 l-3.5 4 v-2.5 q-3.5 0 -5 3z" fill="#1a5fb4"/></svg><div class="dl" style="left:1831px;top:968px"><bdi>טעינת רב-קו</bdi></div><svg style="left:1781px;top:916px" width="48" height="48" viewBox="0 0 48 48" ><ellipse cx="20" cy="17" rx="19" ry="13" fill="#f6f6f8" stroke="#d8242c" stroke-width="2.6" transform="rotate(-12 20 17)"/><ellipse cx="16" cy="28" rx="13" ry="6" fill="#8f9ad8" opacity="0.75" transform="rotate(-12 16 28)"/><path d="M14 6 L30 34 M32 6 L22 32" stroke="#9aa0a6" stroke-width="2.2"/><ellipse cx="33" cy="40" rx="4.5" ry="6" fill="none" stroke="#2a9ad8" stroke-width="3" transform="rotate(-25 33 40)"/><ellipse cx="41" cy="30" rx="6" ry="4.5" fill="none" stroke="#2a9ad8" stroke-width="3" transform="rotate(-25 41 30)"/></svg><svg style="left:1781px;top:950px" width="14" height="14" viewBox="0 0 14 14"><rect x="0.5" y="0.5" width="13" height="13" fill="#fff" stroke="#9aa4ae" stroke-width="1"/><path d="M3.5 11.5 q0 -6 5 -6 v-2.5 l3.5 4 l-3.5 4 v-2.5 q-3.5 0 -5 3z" fill="#1a5fb4"/></svg><div class="dl" style="left:1755px;top:968px"><bdi>צילום מסך</bdi></div><svg style="left:1705px;top:916px" width="48" height="48" viewBox="0 0 48 48" ><path d="M10 3 h23 l9 9 v33 h-32 z" fill="#fff" stroke="#b9b9b9" stroke-width="1"/><path d="M33 3 v9 h9" fill="#e6e6e6" stroke="#b9b9b9" stroke-width="1"/><path d="M23 10.5 H39" stroke="#8e8e8e" stroke-width="2"/><path d="M23 14.5 H39" stroke="#8e8e8e" stroke-width="2"/><path d="M23 18.5 H39" stroke="#8e8e8e" stroke-width="2"/><path d="M23 22.5 H39" stroke="#8e8e8e" stroke-width="2"/><path d="M23 26.5 H39" stroke="#8e8e8e" stroke-width="2"/><path d="M23 30.5 H39" stroke="#8e8e8e" stroke-width="2"/><path d="M23 34.5 H39" stroke="#8e8e8e" stroke-width="2"/><path d="M23 38.5 H39" stroke="#8e8e8e" stroke-width="2"/><path d="M4.500 17.500 L21.700 15 V42 L4.500 40 Z" fill="#2b579a"/><text x="13.200" y="34.500" text-anchor="middle" font-family="Liberation Sans" font-weight="bold" font-size="15" fill="#fff">W</text></svg><div class="dl" style="left:1679px;top:968px"><bdi>בני היכלא</bdi></div><div class="win" style="left:315px;top:250px;width:1123px;height:632px;box-shadow:0 0 0 1px rgba(40,80,120,0.30), 0 3px 10px rgba(0,0,0,0.26), 0 0 4px rgba(0,0,0,0.12);"><svg style="left:18px;top:9px" width="10" height="10" viewBox="0 0 10 10"><path d="M0.3 0.3 L9.7 9.7 M9.7 0.3 L0.3 9.7" stroke="#7d7d7d" stroke-width="1" fill="none"/></svg>
<svg style="left:64px;top:9px" width="10" height="10" viewBox="0 0 10 10"><rect x="0.5" y="0.5" width="9" height="9" stroke="#7d7d7d" stroke-width="1" fill="none"/></svg>
<svg style="left:109px;top:14px" width="10" height="1" viewBox="0 0 10 1"><rect x="0" y="0" width="10" height="1" fill="#7d7d7d"/></svg><svg style="left:4px;top:34px" width="14" height="14" viewBox="0 0 14 14"><circle cx="7" cy="7" r="7" fill="#1565c0"/><text x="7" y="11" text-anchor="middle" font-family="Liberation Sans" font-weight="bold" font-size="11" fill="#fff">?</text></svg>
<svg style="left:28px;top:38px" width="10" height="6" viewBox="0 0 10 6"><path d="M1 5 L5 1 L9 5" stroke="#777" stroke-width="1.1" fill="none"/></svg><div class="filetab"></div><div class="hometab"></div><div class="t rtl" style="right:17px;top:36px;color:#fff;font-size:12px">קובץ</div><div class="t rtl" style="right:70px;top:36px;color:#222;font-size:12px">בית</div><div class="t rtl" style="right:116px;top:36px;color:#222;font-size:12px">שיתוף</div><div class="t rtl" style="right:175px;top:36px;color:#222;font-size:12px">תצוגה</div><svg style="left:1101px;top:6px" width="12" height="16" viewBox="0 0 12 16"><path d="M0.5 0.5 h8 l3 3 v12 h-11z" fill="#fff" stroke="#7a8794" stroke-width="1"/><path d="M3 4h4M3 6.5h6M3 9h6M3 11.5h6" stroke="#2a7ad0" stroke-width="1"/><rect x="6" y="10" width="3" height="3" fill="#3a8a5a"/></svg><div class="abs" style="left:1091px;top:8px;width:1px;height:12px;background:#9a9a9a"></div><svg style="left:1068px;top:7px" width="12" height="16" viewBox="0 0 12 16"><path d="M0.5 0.5 h8 l3 3 v12 h-11z" fill="#fff" stroke="#8a8a8a" stroke-width="1"/><path d="M3 8.5 l2.2 2.5 l4.2 -5" stroke="#e8501a" stroke-width="1.4" fill="none"/></svg><svg style="left:1046px;top:8px" width="13" height="15" viewBox="0 0 13 15"><path d="M0.500 0.500 h10.500 v14.500 h-10.500z" fill="#fbe28e" stroke="#f2cf68" stroke-width="1"/><path d="M10.500 9.500 h2 v5.500 h-2z" fill="#fbe28e" stroke="#f0c858" stroke-width="1"/></svg><svg style="left:1029px;top:11px" width="8" height="8" viewBox="0 0 8 8"><rect x="0" y="0" width="8" height="1.4" fill="#000"/><path d="M0 3.5 h8 l-4 4z" fill="#000"/></svg><div class="abs" style="left:1021px;top:8px;width:1px;height:12px;background:#9a9a9a"></div><div class="t" style="right:109px;top:9px;font-size:12px;color:#8c8c8c">Documents</div><div class="rib"><div class="sep" style="left:864px;top:3px;height:85px"></div><div class="sep" style="left:677px;top:3px;height:85px"></div><div class="sep" style="left:541px;top:3px;height:85px"></div><div class="sep" style="left:414px;top:3px;height:85px"></div><div class="sep" style="left:322px;top:3px;height:85px"></div><div class="sep" style="left:772px;top:10px;height:55px"></div><svg style="left:1069px;top:7px" width="32" height="32" viewBox="0 0 32 32"><g transform="rotate(45 16 17)" fill="#949da3"><path d="M11.500 7.500 h9 v2 l-1.600 1 v5 q3.600 1.500 3.600 4.500 h-13 q0 -3 3.600 -4.500 v-5 l-1.600 -1z"/><path d="M14.800 20 h2.400 l-0.500 7.500 q-0.700 1 -1.400 0z"/></g></svg><div class="rl en" style="left:1040px;top:42px">הצמד לגישה</div><div class="rl en" style="left:1040px;top:55px">מהירה</div><svg style="left:1017px;top:7px" width="32" height="32" viewBox="0 0 32 32"><g transform="translate(0 -1)"><path d="M4.500 3.500 h11 l4 4 v15 h-15z" fill="#eaeff8" stroke="#a9b8d2" stroke-width="1"/><path d="M15.500 3.500 v4 h4" fill="none" stroke="#a9b8d2" stroke-width="1"/><path d="M6.500 7.500h7M6.500 9.500h10M6.500 11.500h10M6.500 13.500h6M6.500 15.500h6M6.500 17.500h6M6.500 19.500h6" stroke="#c9d5e8" stroke-width="1"/><path d="M12.500 11.500 h11 l4 4 v15 h-15z" fill="#f2f5fa" stroke="#a9b8d2" stroke-width="1"/><path d="M23.500 11.500 v4 h4" fill="none" stroke="#a9b8d2" stroke-width="1"/><path d="M14.500 15.500h7M14.500 18h11M14.500 20.500h11M14.500 23h11M14.500 25.500h11M14.500 28h11" stroke="#a9b8d4" stroke-width="1.200"/></g></svg><div class="rl dis" style="left:988px;top:42px">העתק</div><svg style="left:975px;top:7px" width="32" height="32" viewBox="0 0 32 32"><rect x="5" y="3.500" width="21" height="26" rx="1.500" fill="#f2f5fa" stroke="#8f9fc0" stroke-width="2"/><path d="M12 4 q0 -3 3.5 -3 q3.5 0 3.500 3 h2 v3 h-11 v-3z" fill="#b4c2dc" stroke="#8f9fc0" stroke-width="0.8"/><path d="M8 11.500h15M8 14.500h15M8 17.500h15M8 20.500h15M8 23.500h15" stroke="#c9d5e8" stroke-width="1"/></svg><div class="rl dis" style="left:946px;top:42px">הדבק</div><svg style="left:951px;top:8px" width="16" height="16" viewBox="0 0 16 16"><g stroke="#9aa6c0" stroke-width="1.3" fill="none"><path d="M5 1 L10.500 10.500 M11 1 L5.500 10.500"/><circle cx="4.500" cy="12.500" r="2.300"/><circle cx="11.500" cy="12.500" r="2.300"/></g></svg><div class="rs dis" style="right:176px;top:8.5px">גזור</div><svg style="left:951px;top:30px" width="16" height="16" viewBox="0 0 16 16"><rect x="0.500" y="4.500" width="15" height="8" fill="#e3eaf5" stroke="#c9d5e8" stroke-width="1"/><path d="M3 6.500l1.500 4M5.500 6.500l1.500 4" stroke="#5f76a8" stroke-width="1"/><path d="M9 10h1M11 10h1M13 10h1" stroke="#5f76a8" stroke-width="1"/></svg><div class="rs dis" style="right:176px;top:30.5px">העתק נתיב</div><svg style="left:951px;top:52px" width="16" height="16" viewBox="0 0 16 16"><rect x="2.500" y="2.500" width="11" height="13" rx="1" fill="#e3eaf5" stroke="#8f9fc0" stroke-width="1.400"/><rect x="5.500" y="0.500" width="5" height="3" fill="#b4c2dc" stroke="#8f9fc0" stroke-width="0.600"/><path d="M5.500 12 q0 -4 3.500 -4 v-1.500 l2.500 2.500 l-2.500 2.500 v-1.500 q-2 0 -3.500 2z" fill="#5f76a8"/></svg><div class="rs dis" style="right:176px;top:52.5px">הדבק קיצור דרך</div><svg style="left:825px;top:7px" width="32" height="32" viewBox="0 0 32 32"><rect x="3.500" y="2.500" width="22" height="27" fill="#e3eaf5" stroke="#c9d5e8" stroke-width="1"/><path d="M6.500 3 v26" stroke="#c9d5e8" stroke-width="1"/><path d="M13 23 l8 -7.500 v4 h8 v7 h-8 v4z" fill="#a3b3d4"/></svg><div class="rl dis" style="left:796px;top:42px">העבר</div><div class="rl dis" style="left:796px;top:55px">אל&nbsp;&nbsp;</div><svg style="left:829px;top:59.5px" width="6" height="3" viewBox="0 0 7 4"><path d="M0 0 h7 l-3.5 4z" fill="#a8a8a8"/></svg><svg style="left:783px;top:7px" width="32" height="32" viewBox="0 0 32 32"><rect x="3.500" y="2.500" width="22" height="27" fill="#e3eaf5" stroke="#c9d5e8" stroke-width="1"/><path d="M21 3 v26" stroke="#c9d5e8" stroke-width="1"/><path d="M12.500 1.500 h7 l3 3 v11 h-10z" fill="#f4f7fb" stroke="#a9b8d2" stroke-width="1"/><path d="M14.500 5.500h5M14.500 8h6M14.500 10.500h6" stroke="#c9d5e8" stroke-width="1"/><path d="M17.500 4.500 h8 l3 3 v12 h-11z" fill="#f4f7fb" stroke="#a9b8d2" stroke-width="1"/><path d="M19.500 9.500h7M19.500 12h7M19.500 14.500h7M19.500 17h7" stroke="#a9b8d2" stroke-width="1"/></svg><div class="rl dis" style="left:754px;top:42px">העתק</div><div class="rl dis" style="left:754px;top:55px">אל&nbsp;&nbsp;</div><svg style="left:787px;top:59.5px" width="6" height="3" viewBox="0 0 7 4"><path d="M0 0 h7 l-3.5 4z" fill="#a8a8a8"/></svg><svg style="left:731px;top:7px" width="32" height="32" viewBox="0 0 32 32"><path d="M4 3 L28 27 M28 3 L4 27" stroke="#8797b6" stroke-width="4.200" fill="none"/></svg><div class="rl en" style="left:702px;top:42px">מחק</div><svg style="left:744px;top:59px" width="7" height="4" viewBox="0 0 7 4"><path d="M0 0 h7 l-3.5 4z" fill="#000"/></svg><svg style="left:689px;top:7px" width="32" height="32" viewBox="0 0 32 32"><rect x="2.500" y="9.500" width="26" height="11" fill="#e3eaf5" stroke="#a9b8d2" stroke-width="1"/><rect x="6" y="12.500" width="12" height="5" fill="#9fb0d0"/><path d="M19 2.500 q3.500 0 4.500 2 q1 -2 4.500 -2 M19 28.500 q3.500 0 4.500 -2 q1 2 4.500 2 M23.500 4.500 v22" stroke="#8797b6" stroke-width="1.600" fill="none"/></svg><div class="rl dis" style="left:660px;top:42px">שנה</div><div class="rl dis" style="left:660px;top:55px">שם</div><svg style="left:635px;top:7px" width="32" height="32" viewBox="0 0 32 32"><path d="M6 4 h10 v24 l-10 -3z" fill="#e8b83a"/><path d="M9 3 h13 v26 h-9 l-4 -3z" fill="#f8d775"/><path d="M22 18 h3 v8 l-3 3z" fill="#e2b040"/><path d="M9 3 h13 v2 h-13z" fill="#fbe6a0"/></svg><div class="rl en" style="left:606px;top:42px">תיקיה</div><div class="rl en" style="left:606px;top:55px">חדשה</div><svg style="left:612px;top:8px" width="16" height="16" viewBox="0 0 16 16"><rect x="0.500" y="0.500" width="9" height="7" fill="#dfeaf8" stroke="#5a86c0" stroke-width="1"/><rect x="2" y="2" width="6" height="3" fill="#2a7ad0"/><path d="M5.500 5.500 h7 l3 3 v7 h-10z" fill="#fff" stroke="#8a8a8a" stroke-width="1"/><path d="M7.500 9.500h5M7.500 11.500h6M7.500 13.500h6" stroke="#d85a4a" stroke-width="0.800"/></svg><div class="rs en" style="right:514px;top:8.5px">פריט חדש</div><svg style="left:552px;top:14px" width="7" height="4" viewBox="0 0 7 4"><path d="M0 0 h7 l-3.5 4z" fill="#000"/></svg><svg style="left:612px;top:30px" width="16" height="16" viewBox="0 0 16 16"><path d="M4.500 1.500 h8 l3 3 v11 h-11z" fill="#fff" stroke="#8a8a8a" stroke-width="1"/><path d="M1 5.500h6M0 7.500h6M1 9.500h5" stroke="#2a6ab8" stroke-width="1"/></svg><div class="rs en" style="right:514px;top:30.5px">גישה נוחה</div><svg style="left:551px;top:36px" width="7" height="4" viewBox="0 0 7 4"><path d="M0 0 h7 l-3.5 4z" fill="#000"/></svg><svg style="left:498px;top:7px" width="32" height="32" viewBox="0 0 32 32"><path d="M5.500 1.500 h14 l6 6 v23 h-20z" fill="#fff" stroke="#8a8a8a" stroke-width="1"/><path d="M19.500 1.500 v6 h6" fill="none" stroke="#8a8a8a" stroke-width="1"/><path d="M9 17 l5 5.500 l9 -11" stroke="#f0531c" stroke-width="2.600" fill="none"/></svg><div class="rl en" style="left:469px;top:42px">מאפיינים</div><svg style="left:511px;top:59px" width="7" height="4" viewBox="0 0 7 4"><path d="M0 0 h7 l-3.5 4z" fill="#000"/></svg><svg style="left:472px;top:8px" width="16" height="16" viewBox="0 0 16 16"><rect x="1.500" y="0.500" width="11" height="14" fill="#e3eaf5" stroke="#a9b8d2" stroke-width="1"/><path d="M3 3.500h2M3 6.500h2M3 9.500h2M6.500 3.500h4M6.500 6.500h4" stroke="#8f9fc0" stroke-width="1.200"/><path d="M12 15 v-5 h-2.500 l4 -4 l3 4 h-2 v5z" fill="#9fb0d4"/></svg><div class="rs dis" style="right:656px;top:8.5px">פתח</div><svg style="left:435px;top:15px" width="6" height="3" viewBox="0 0 7 4"><path d="M0 0 h7 l-3.5 4z" fill="#aaa"/></svg><svg style="left:472px;top:30px" width="16" height="16" viewBox="0 0 16 16"><path d="M2.500 1.500 h8 l3 3 v10 h-11z" fill="#e3eaf5" stroke="#a9b8d2" stroke-width="1"/><path d="M5 13 l1 -3 l7 -7 l2 2 l-7 7z" fill="#dfe6f2" stroke="#9fb0d4" stroke-width="1"/></svg><div class="rs dis" style="right:656px;top:30.5px">ערוך</div><svg style="left:472px;top:52px" width="16" height="16" viewBox="0 0 16 16"><rect x="1.500" y="0.500" width="10" height="12" fill="#e3eaf5" stroke="#c9d5e8" stroke-width="1"/><circle cx="10.500" cy="10.500" r="5" fill="#eef2f8" stroke="#9fb0d4" stroke-width="1.400"/><path d="M10.500 7.500 v3 l2 1.500" stroke="#8f9fc0" stroke-width="1" fill="none"/><path d="M1 9 l3 3 l3 -3" fill="#9fb0d4"/></svg><div class="rs dis" style="right:656px;top:52.5px">היסטוריה</div><svg style="left:391px;top:8px" width="16" height="16" viewBox="0 0 16 16"><rect x="0.5" y="0.5" width="6" height="6" fill="#bfe0fb" stroke="#3a96dd" stroke-width="1"/><rect x="8.5" y="0.5" width="6" height="6" fill="#bfe0fb" stroke="#3a96dd" stroke-width="1"/><rect x="0.5" y="8.5" width="6" height="6" fill="#bfe0fb" stroke="#3a96dd" stroke-width="1"/><rect x="8.5" y="8.5" width="6" height="6" fill="#bfe0fb" stroke="#3a96dd" stroke-width="1"/></svg><div class="rs en" style="right:736px;top:8.5px">בחר הכל</div><svg style="left:391px;top:30px" width="16" height="16" viewBox="0 0 16 16"><rect x="0.5" y="0.5" width="6" height="6" fill="#fff" stroke="#9a9a9a" stroke-width="1"/><rect x="8.5" y="0.5" width="6" height="6" fill="#fff" stroke="#9a9a9a" stroke-width="1"/><rect x="0.5" y="8.5" width="6" height="6" fill="#fff" stroke="#9a9a9a" stroke-width="1"/><rect x="8.5" y="8.5" width="6" height="6" fill="#fff" stroke="#9a9a9a" stroke-width="1"/></svg><div class="rs en" style="right:736px;top:30.5px">אל תבחר</div><svg style="left:391px;top:52px" width="16" height="16" viewBox="0 0 16 16"><rect x="0.5" y="0.5" width="6" height="6" fill="#fff" stroke="#9a9a9a" stroke-width="1"/><rect x="8.5" y="0.5" width="6" height="6" fill="#bfe0fb" stroke="#3a96dd" stroke-width="1"/><rect x="0.5" y="8.5" width="6" height="6" fill="#bfe0fb" stroke="#3a96dd" stroke-width="1"/><rect x="8.5" y="8.5" width="6" height="6" fill="#fff" stroke="#9a9a9a" stroke-width="1"/></svg><div class="rs en" style="right:736px;top:52.5px">הפוך בחירה</div><div class="gl" style="left:954px;top:75px">לוח</div><div class="gl" style="left:732px;top:75px">ארגון</div><div class="gl" style="left:569px;top:75px">חדש</div><div class="gl" style="left:437px;top:75px">פתח</div><div class="gl" style="left:328px;top:75px">בחירה</div></div><div class="box" style="left:12px;top:151px;width:332px;height:30px"></div><div class="t" style="left:30px;top:160px;color:#6d6d6d;font-size:12px">Documents <span class="rtl">תיקיית</span></div><div class="abs" style="left:26px;top:609px;width:22px;height:23px;background:#cce8ff;border:1px solid #26a0da;border-bottom:none"></div>
<svg style="left:28px;top:612px" width="18" height="16" viewBox="0 0 18 16"><g stroke="#777" stroke-width="1"><path d="M1 3.5h3M6 3.5h4M1 7.5h3M6 7.5h4M1 11.5h3M6 11.5h4"/></g><rect x="11.5" y="1.5" width="4" height="12" fill="#fff" stroke="#888" stroke-width="0.8"/><rect x="13" y="3" width="1" height="1" fill="#555"/><rect x="13" y="7" width="1" height="1" fill="#28f"/><rect x="13" y="11" width="1" height="1" fill="#d22"/></svg>
<div class="abs" style="left:8px;top:614px;width:14px;height:11px;border:1px solid #999;background:#fff"></div>
<div class="abs" style="left:10px;top:616px;width:10px;height:7px;background:linear-gradient(#6aa9e9,#cfe6f5 55%,#4d7f56 60%,#3b6b58)"></div></div><div class="win" style="left:445px;top:380px;width:1123px;height:632px;box-shadow:0 0 0 1px rgba(40,80,120,0.30), 0 3px 10px rgba(0,0,0,0.26), 0 0 4px rgba(0,0,0,0.12);"><svg style="left:18px;top:9px" width="10" height="10" viewBox="0 0 10 10"><path d="M0.3 0.3 L9.7 9.7 M9.7 0.3 L0.3 9.7" stroke="#7d7d7d" stroke-width="1" fill="none"/></svg>
<svg style="left:64px;top:9px" width="10" height="10" viewBox="0 0 10 10"><rect x="0.5" y="0.5" width="9" height="9" stroke="#7d7d7d" stroke-width="1" fill="none"/></svg>
<svg style="left:109px;top:14px" width="10" height="1" viewBox="0 0 10 1"><rect x="0" y="0" width="10" height="1" fill="#7d7d7d"/></svg><svg style="left:4px;top:34px" width="14" height="14" viewBox="0 0 14 14"><circle cx="7" cy="7" r="7" fill="#1565c0"/><text x="7" y="11" text-anchor="middle" font-family="Liberation Sans" font-weight="bold" font-size="11" fill="#fff">?</text></svg>
<svg style="left:28px;top:38px" width="10" height="6" viewBox="0 0 10 6"><path d="M1 5 L5 1 L9 5" stroke="#777" stroke-width="1.1" fill="none"/></svg><div class="filetab"></div><div class="hometab"></div><div class="t rtl" style="right:17px;top:36px;color:#fff;font-size:12px">קובץ</div><div class="t rtl" style="right:70px;top:36px;color:#222;font-size:12px">בית</div><div class="t rtl" style="right:116px;top:36px;color:#222;font-size:12px">שיתוף</div><div class="t rtl" style="right:175px;top:36px;color:#222;font-size:12px">תצוגה</div><svg style="left:1099px;top:7px" width="15" height="13" viewBox="0 0 15 13"><rect x="0.500" y="0.500" width="14" height="12" rx="1" fill="#fff" stroke="#7a7a7a" stroke-width="1.200"/><rect x="2" y="3" width="5" height="7" fill="#3a9a6a"/><rect x="2" y="3" width="5" height="2" fill="#3a7ab0"/><rect x="8.500" y="8.500" width="3" height="1.500" fill="#bbb"/><rect x="12" y="3" width="1" height="4" fill="#3a8a5a"/></svg><div class="abs" style="left:1091px;top:8px;width:1px;height:12px;background:#9a9a9a"></div><svg style="left:1068px;top:7px" width="12" height="16" viewBox="0 0 12 16"><path d="M0.5 0.5 h8 l3 3 v12 h-11z" fill="#f4f7fb" stroke="#b9c6dc" stroke-width="1"/><path d="M3 8.5 l2.2 2.5 l4.2 -5" stroke="#b0c0dc" stroke-width="1.4" fill="none"/></svg><svg style="left:1046px;top:7px" width="13" height="16" viewBox="0 0 13 16"><path d="M0.500 0.500 h11 v15 h-11z" fill="#dfe7f4" stroke="#ccd8ea" stroke-width="1"/><path d="M10.500 9.500 h2 v6 h-2z" fill="#e6ecf6" stroke="#ccd8ea" stroke-width="1"/></svg><svg style="left:1029px;top:11px" width="8" height="8" viewBox="0 0 8 8"><rect x="0" y="0" width="8" height="1.4" fill="#000"/><path d="M0 3.5 h8 l-4 4z" fill="#000"/></svg><div class="abs" style="left:1021px;top:8px;width:1px;height:12px;background:#9a9a9a"></div><div class="t rtl" style="right:109px;top:9px;font-size:12px;color:#8c8c8c">סייר הקבצים</div><div class="rib"><div class="sep" style="left:864px;top:3px;height:85px"></div><div class="sep" style="left:677px;top:3px;height:85px"></div><div class="sep" style="left:541px;top:3px;height:85px"></div><div class="sep" style="left:414px;top:3px;height:85px"></div><div class="sep" style="left:322px;top:3px;height:85px"></div><div class="sep" style="left:772px;top:10px;height:55px"></div><svg style="left:1069px;top:7px" width="32" height="32" viewBox="0 0 32 32"><g transform="rotate(45 16 17)" fill="#949da3"><path d="M11.500 7.500 h9 v2 l-1.600 1 v5 q3.600 1.500 3.600 4.500 h-13 q0 -3 3.600 -4.500 v-5 l-1.600 -1z"/><path d="M14.800 20 h2.400 l-0.500 7.500 q-0.700 1 -1.400 0z"/></g></svg><div class="rl en" style="left:1040px;top:42px">הצמד לגישה</div><div class="rl en" style="left:1040px;top:55px">מהירה</div><svg style="left:1017px;top:7px" width="32" height="32" viewBox="0 0 32 32"><g transform="translate(0 -1)"><path d="M4.500 3.500 h11 l4 4 v15 h-15z" fill="#eaeff8" stroke="#a9b8d2" stroke-width="1"/><path d="M15.500 3.500 v4 h4" fill="none" stroke="#a9b8d2" stroke-width="1"/><path d="M6.500 7.500h7M6.500 9.500h10M6.500 11.500h10M6.500 13.500h6M6.500 15.500h6M6.500 17.500h6M6.500 19.500h6" stroke="#c9d5e8" stroke-width="1"/><path d="M12.500 11.500 h11 l4 4 v15 h-15z" fill="#f2f5fa" stroke="#a9b8d2" stroke-width="1"/><path d="M23.500 11.500 v4 h4" fill="none" stroke="#a9b8d2" stroke-width="1"/><path d="M14.500 15.500h7M14.500 18h11M14.500 20.500h11M14.500 23h11M14.500 25.500h11M14.500 28h11" stroke="#a9b8d4" stroke-width="1.200"/></g></svg><div class="rl dis" style="left:988px;top:42px">העתק</div><svg style="left:975px;top:7px" width="32" height="32" viewBox="0 0 32 32"><rect x="5" y="3.500" width="21" height="26" rx="1.500" fill="#f2f5fa" stroke="#8f9fc0" stroke-width="2"/><path d="M12 4 q0 -3 3.5 -3 q3.5 0 3.500 3 h2 v3 h-11 v-3z" fill="#b4c2dc" stroke="#8f9fc0" stroke-width="0.8"/><path d="M8 11.500h15M8 14.500h15M8 17.500h15M8 20.500h15M8 23.500h15" stroke="#c9d5e8" stroke-width="1"/></svg><div class="rl dis" style="left:946px;top:42px">הדבק</div><svg style="left:951px;top:8px" width="16" height="16" viewBox="0 0 16 16"><g stroke="#9aa6c0" stroke-width="1.3" fill="none"><path d="M5 1 L10.500 10.500 M11 1 L5.500 10.500"/><circle cx="4.500" cy="12.500" r="2.300"/><circle cx="11.500" cy="12.500" r="2.300"/></g></svg><div class="rs dis" style="right:176px;top:8.5px">גזור</div><svg style="left:951px;top:30px" width="16" height="16" viewBox="0 0 16 16"><rect x="0.500" y="4.500" width="15" height="8" fill="#e3eaf5" stroke="#c9d5e8" stroke-width="1"/><path d="M3 6.500l1.500 4M5.500 6.500l1.500 4" stroke="#5f76a8" stroke-width="1"/><path d="M9 10h1M11 10h1M13 10h1" stroke="#5f76a8" stroke-width="1"/></svg><div class="rs dis" style="right:176px;top:30.5px">העתק נתיב</div><svg style="left:951px;top:52px" width="16" height="16" viewBox="0 0 16 16"><rect x="2.500" y="2.500" width="11" height="13" rx="1" fill="#e3eaf5" stroke="#8f9fc0" stroke-width="1.400"/><rect x="5.500" y="0.500" width="5" height="3" fill="#b4c2dc" stroke="#8f9fc0" stroke-width="0.600"/><path d="M5.500 12 q0 -4 3.500 -4 v-1.500 l2.500 2.500 l-2.500 2.500 v-1.500 q-2 0 -3.500 2z" fill="#5f76a8"/></svg><div class="rs dis" style="right:176px;top:52.5px">הדבק קיצור דרך</div><svg style="left:825px;top:7px" width="32" height="32" viewBox="0 0 32 32"><rect x="3.500" y="2.500" width="22" height="27" fill="#e3eaf5" stroke="#c9d5e8" stroke-width="1"/><path d="M6.500 3 v26" stroke="#c9d5e8" stroke-width="1"/><path d="M13 23 l8 -7.500 v4 h8 v7 h-8 v4z" fill="#a3b3d4"/></svg><div class="rl dis" style="left:796px;top:42px">העבר</div><div class="rl dis" style="left:796px;top:55px">אל&nbsp;&nbsp;</div><svg style="left:829px;top:59.5px" width="6" height="3" viewBox="0 0 7 4"><path d="M0 0 h7 l-3.5 4z" fill="#a8a8a8"/></svg><svg style="left:783px;top:7px" width="32" height="32" viewBox="0 0 32 32"><rect x="3.500" y="2.500" width="22" height="27" fill="#e3eaf5" stroke="#c9d5e8" stroke-width="1"/><path d="M21 3 v26" stroke="#c9d5e8" stroke-width="1"/><path d="M12.500 1.500 h7 l3 3 v11 h-10z" fill="#f4f7fb" stroke="#a9b8d2" stroke-width="1"/><path d="M14.500 5.500h5M14.500 8h6M14.500 10.500h6" stroke="#c9d5e8" stroke-width="1"/><path d="M17.500 4.500 h8 l3 3 v12 h-11z" fill="#f4f7fb" stroke="#a9b8d2" stroke-width="1"/><path d="M19.500 9.500h7M19.500 12h7M19.500 14.500h7M19.500 17h7" stroke="#a9b8d2" stroke-width="1"/></svg><div class="rl dis" style="left:754px;top:42px">העתק</div><div class="rl dis" style="left:754px;top:55px">אל&nbsp;&nbsp;</div><svg style="left:787px;top:59.5px" width="6" height="3" viewBox="0 0 7 4"><path d="M0 0 h7 l-3.5 4z" fill="#a8a8a8"/></svg><svg style="left:731px;top:7px" width="32" height="32" viewBox="0 0 32 32"><path d="M4 3 L28 27 M28 3 L4 27" stroke="#8797b6" stroke-width="4.200" fill="none"/></svg><div class="rl en" style="left:702px;top:42px">מחק</div><svg style="left:744px;top:59px" width="7" height="4" viewBox="0 0 7 4"><path d="M0 0 h7 l-3.5 4z" fill="#000"/></svg><svg style="left:689px;top:7px" width="32" height="32" viewBox="0 0 32 32"><rect x="2.500" y="9.500" width="26" height="11" fill="#e3eaf5" stroke="#a9b8d2" stroke-width="1"/><rect x="6" y="12.500" width="12" height="5" fill="#9fb0d0"/><path d="M19 2.500 q3.500 0 4.500 2 q1 -2 4.500 -2 M19 28.500 q3.500 0 4.500 -2 q1 2 4.500 2 M23.500 4.500 v22" stroke="#8797b6" stroke-width="1.600" fill="none"/></svg><div class="rl dis" style="left:660px;top:42px">שנה</div><div class="rl dis" style="left:660px;top:55px">שם</div><svg style="left:635px;top:7px" width="32" height="32" viewBox="0 0 32 32"><path d="M6 4 h10 v24 l-10 -3z" fill="#e8b83a"/><path d="M9 3 h13 v26 h-9 l-4 -3z" fill="#f8d775"/><path d="M22 18 h3 v8 l-3 3z" fill="#e2b040"/><path d="M9 3 h13 v2 h-13z" fill="#fbe6a0"/></svg><div class="rl en" style="left:606px;top:42px">תיקיה</div><div class="rl en" style="left:606px;top:55px">חדשה</div><svg style="left:612px;top:8px" width="16" height="16" viewBox="0 0 16 16"><rect x="0.500" y="0.500" width="9" height="7" fill="#dfeaf8" stroke="#5a86c0" stroke-width="1"/><rect x="2" y="2" width="6" height="3" fill="#2a7ad0"/><path d="M5.500 5.500 h7 l3 3 v7 h-10z" fill="#fff" stroke="#8a8a8a" stroke-width="1"/><path d="M7.500 9.500h5M7.500 11.500h6M7.500 13.500h6" stroke="#d85a4a" stroke-width="0.800"/></svg><div class="rs en" style="right:514px;top:8.5px">פריט חדש</div><svg style="left:552px;top:14px" width="7" height="4" viewBox="0 0 7 4"><path d="M0 0 h7 l-3.5 4z" fill="#000"/></svg><svg style="left:612px;top:30px" width="16" height="16" viewBox="0 0 16 16"><path d="M4.500 1.500 h8 l3 3 v11 h-11z" fill="#fff" stroke="#8a8a8a" stroke-width="1"/><path d="M1 5.500h6M0 7.500h6M1 9.500h5" stroke="#2a6ab8" stroke-width="1"/></svg><div class="rs en" style="right:514px;top:30.5px">גישה נוחה</div><svg style="left:551px;top:36px" width="7" height="4" viewBox="0 0 7 4"><path d="M0 0 h7 l-3.5 4z" fill="#000"/></svg><svg style="left:498px;top:7px" width="32" height="32" viewBox="0 0 32 32"><path d="M5.500 1.500 h14 l6 6 v23 h-20z" fill="#fff" stroke="#8a8a8a" stroke-width="1"/><path d="M19.500 1.500 v6 h6" fill="none" stroke="#8a8a8a" stroke-width="1"/><path d="M9 17 l5 5.500 l9 -11" stroke="#f0531c" stroke-width="2.600" fill="none"/></svg><div class="rl en" style="left:469px;top:42px">מאפיינים</div><svg style="left:511px;top:59px" width="7" height="4" viewBox="0 0 7 4"><path d="M0 0 h7 l-3.5 4z" fill="#000"/></svg><svg style="left:472px;top:8px" width="16" height="16" viewBox="0 0 16 16"><rect x="1.500" y="0.500" width="11" height="14" fill="#e3eaf5" stroke="#a9b8d2" stroke-width="1"/><path d="M3 3.500h2M3 6.500h2M3 9.500h2M6.500 3.500h4M6.500 6.500h4" stroke="#8f9fc0" stroke-width="1.200"/><path d="M12 15 v-5 h-2.500 l4 -4 l3 4 h-2 v5z" fill="#9fb0d4"/></svg><div class="rs dis" style="right:656px;top:8.5px">פתח</div><svg style="left:435px;top:15px" width="6" height="3" viewBox="0 0 7 4"><path d="M0 0 h7 l-3.5 4z" fill="#aaa"/></svg><svg style="left:472px;top:30px" width="16" height="16" viewBox="0 0 16 16"><path d="M2.500 1.500 h8 l3 3 v10 h-11z" fill="#e3eaf5" stroke="#a9b8d2" stroke-width="1"/><path d="M5 13 l1 -3 l7 -7 l2 2 l-7 7z" fill="#dfe6f2" stroke="#9fb0d4" stroke-width="1"/></svg><div class="rs dis" style="right:656px;top:30.5px">ערוך</div><svg style="left:472px;top:52px" width="16" height="16" viewBox="0 0 16 16"><rect x="1.500" y="0.500" width="10" height="12" fill="#e3eaf5" stroke="#c9d5e8" stroke-width="1"/><circle cx="10.500" cy="10.500" r="5" fill="#eef2f8" stroke="#9fb0d4" stroke-width="1.400"/><path d="M10.500 7.500 v3 l2 1.500" stroke="#8f9fc0" stroke-width="1" fill="none"/><path d="M1 9 l3 3 l3 -3" fill="#9fb0d4"/></svg><div class="rs dis" style="right:656px;top:52.5px">היסטוריה</div><svg style="left:391px;top:8px" width="16" height="16" viewBox="0 0 16 16"><rect x="0.5" y="0.5" width="6" height="6" fill="#bfe0fb" stroke="#3a96dd" stroke-width="1"/><rect x="8.5" y="0.5" width="6" height="6" fill="#bfe0fb" stroke="#3a96dd" stroke-width="1"/><rect x="0.5" y="8.5" width="6" height="6" fill="#bfe0fb" stroke="#3a96dd" stroke-width="1"/><rect x="8.5" y="8.5" width="6" height="6" fill="#bfe0fb" stroke="#3a96dd" stroke-width="1"/></svg><div class="rs en" style="right:736px;top:8.5px">בחר הכל</div><svg style="left:391px;top:30px" width="16" height="16" viewBox="0 0 16 16"><rect x="0.5" y="0.5" width="6" height="6" fill="#fff" stroke="#9a9a9a" stroke-width="1"/><rect x="8.5" y="0.5" width="6" height="6" fill="#fff" stroke="#9a9a9a" stroke-width="1"/><rect x="0.5" y="8.5" width="6" height="6" fill="#fff" stroke="#9a9a9a" stroke-width="1"/><rect x="8.5" y="8.5" width="6" height="6" fill="#fff" stroke="#9a9a9a" stroke-width="1"/></svg><div class="rs en" style="right:736px;top:30.5px">אל תבחר</div><svg style="left:391px;top:52px" width="16" height="16" viewBox="0 0 16 16"><rect x="0.5" y="0.5" width="6" height="6" fill="#fff" stroke="#9a9a9a" stroke-width="1"/><rect x="8.5" y="0.5" width="6" height="6" fill="#bfe0fb" stroke="#3a96dd" stroke-width="1"/><rect x="0.5" y="8.5" width="6" height="6" fill="#bfe0fb" stroke="#3a96dd" stroke-width="1"/><rect x="8.5" y="8.5" width="6" height="6" fill="#fff" stroke="#9a9a9a" stroke-width="1"/></svg><div class="rs en" style="right:736px;top:52.5px">הפוך בחירה</div><div class="gl" style="left:954px;top:75px">לוח</div><div class="gl" style="left:732px;top:75px">ארגון</div><div class="gl" style="left:569px;top:75px">חדש</div><div class="gl" style="left:437px;top:75px">פתח</div><div class="gl" style="left:328px;top:75px">בחירה</div></div><svg style="left:1098px;top:160px" width="12" height="11" viewBox="0 0 12 11"><path d="M0 5.500 h12 M7 0.500 l5 5 l-5 5" stroke="#dadada" stroke-width="1.500" fill="none"/></svg><svg style="left:1068px;top:160px" width="12" height="11" viewBox="0 0 12 11"><path d="M12 5.500 h-12 M5 0.500 l-5 5 l5 5" stroke="#dadada" stroke-width="1.500" fill="none"/></svg><svg style="left:1047px;top:163px" width="7" height="4" viewBox="0 0 7 4"><path d="M0.500 0.500 l3 3 l3 -3" stroke="#d4d4d4" stroke-width="1.200" fill="none"/></svg><svg style="left:1024px;top:160px" width="11" height="13" viewBox="0 0 11 13"><path d="M5.500 13 v-12 M0.500 6 l5 -5 l5 5" stroke="#b0b0b0" stroke-width="1.700" fill="none"/></svg><div class="box" style="left:226px;top:152px;width:791px;height:29px"></div><div class="abs" style="left:256px;top:153px;width:1px;height:27px;background:#e0e0e0"></div><svg style="left:236px;top:162px" width="9" height="9" viewBox="0 0 9 9"><path d="M0.500 0.500 l8 8 M8.500 0.500 l-8 8" stroke="#555" stroke-width="1.800" fill="none"/></svg><svg style="left:267px;top:163px" width="9" height="6" viewBox="0 0 9 6"><path d="M0.500 0.500 l4 4 l4 -4" stroke="#444" stroke-width="1.600" fill="none"/></svg><div class="box" style="left:12px;top:152px;width:202px;height:29px"></div><svg style="left:187px;top:160px" width="12" height="12" viewBox="0 0 12 12"><circle cx="7.500" cy="4.500" r="3.800" fill="none" stroke="#8a8a8a" stroke-width="1"/><path d="M4.800 7.200 L0.500 11.500" stroke="#8a8a8a" stroke-width="1.200"/></svg></div><div class="abs" style="left:776px;top:400px;width:352px;height:170px;background:#fff;border:1px solid #6b6b6b;box-shadow:0 3px 12px rgba(0,0,0,0.22),0 0 6px rgba(0,0,0,0.12)"><svg style="left:10px;top:9px" width="11" height="11" viewBox="0 0 11 11"><path d="M0.5 0.5 L10.5 10.5 M10.5 0.5 L0.5 10.5" stroke="#000" stroke-width="1.1" fill="none"/></svg><div class="t" style="right:8px;top:9px;font-size:12.2px;color:#000">Microsoft Windows</div><div class="t rtl" style="right:10px;top:42px;font-size:16.25px;color:#003399;line-height:20px;white-space:normal;width:310px;text-align:right">עליך לאתחל את הדיסק בכונן ‎F:‎ בטרם תוכל להשתמש בו.</div><div class="t rtl" style="right:10px;top:99px;font-size:12px;color:#000">האם ברצונך לבצע אתחול?</div><div class="abs" style="left:0;right:0;top:127px;bottom:0;background:#f0f0f0;border-top:1px solid #dfdfdf"></div><div class="abs" style="left:11px;top:137px;width:66px;height:21px;background:#e1e1e1;border:1px solid #adadad"></div><div class="t rtl" style="left:11px;width:66px;text-align:center;top:142px;font-size:12px;color:#000">ביטול</div><div class="abs" style="left:85px;top:137px;width:94px;height:21px;background:#e1e1e1;border:2px solid #0078d7"></div><div class="t rtl" style="left:85px;width:94px;text-align:center;top:142px;font-size:12px;color:#000">אתחל דיסק</div></div><div id="tb"><div class="abs" style="left:1774px;top:0;width:47px;height:40px;background:#2a3442"></div><div class="abs" style="left:1773px;top:0;width:1px;height:40px;background:#3c4654"></div><div class="run" style="left:1774px;width:47px"></div><div class="run" style="left:1728px"></div><div class="run" style="left:1140px"></div><div class="run" style="left:1091px"></div><div class="run" style="left:1042px"></div><svg style="left:1886.0px;top:10.0px" width="20" height="20" viewBox="0 0 48 48" ><path d="M4 10 L21 7.5 V23 H4 Z M23 7.2 L44 4 V23 H23 Z M4 25 H21 V40.5 L4 38 Z M23 25 H44 V44 L23 40.8 Z" fill="#fff"/></svg><svg style="left:1838.0px;top:10.0px" width="20" height="20" viewBox="0 0 48 48" ><circle cx="29" cy="18" r="11" fill="none" stroke="#fff" stroke-width="3"/><path d="M21 27 L7 42" stroke="#fff" stroke-width="3.4" stroke-linecap="round"/></svg><svg style="left:1785.0px;top:8.0px" width="24" height="24" viewBox="0 0 48 48" ><path d="M3 9 h14 l4 4 h24 v8 h-42z" fill="#e8a818"/><rect x="3" y="15" width="42" height="26" rx="1" fill="#f8d050"/><path d="M3 30 h42 v11 h-42z" fill="#f0c030"/><path d="M13 41 v-10 q0 -2 2 -2 h18 q2 0 2 2 v10 h-6 v-6 h-10 v6z" fill="#2a8ae0"/></svg><svg style="left:1735.5px;top:8.0px" width="24" height="24" viewBox="0 0 48 48" ><circle cx="24" cy="24" r="22" fill="#fff"/><path d="M24 2 A22 22 0 0 1 43.05 13 L24 13 A11 11 0 0 0 14.47 18.5 L4.95 13 A22 22 0 0 1 24 2 Z" fill="#e33b2e"/><path d="M43.05 13 A22 22 0 0 1 24 46 L33.53 29.5 A11 11 0 0 0 33.53 18.5 L24 13 Z" fill="#fcc934"/><path d="M43.05 13 L24 13 L33.53 18.5 Z" fill="#fcc934"/><path d="M4.95 13 L14.47 29.5 A11 11 0 0 0 33.53 29.5 L24 46 A22 22 0 0 1 4.95 13 Z" fill="#2da94f"/><circle cx="24" cy="24" r="10" fill="#fff"/><circle cx="24" cy="24" r="8" fill="#4a8af4"/></svg><svg style="left:1687.0px;top:8.0px" width="24" height="24" viewBox="0 0 48 48" ><rect x="1" y="1" width="46" height="46" fill="#0e8ee9"/><circle cx="24" cy="24" r="18.5" fill="#fff"/><path d="M8.5 24 l9.5 -6 v3.6 h12 v-3.6 l9.5 6 l-9.5 6 v-3.6 h-12 v3.6 z" fill="#0a6fd0"/></svg><svg style="left:1638.0px;top:8.0px" width="24" height="24" viewBox="0 0 48 48" ><rect x="22" y="7" width="23" height="34" fill="#fff" stroke="#d24726" stroke-width="1.4"/><circle cx="35" cy="19" r="6" fill="#d24726"/><rect x="29" y="29" width="13" height="2.4" fill="#d24726"/><rect x="29" y="34" width="13" height="2.4" fill="#d24726"/><path d="M3 6 L27 2 V46 L3 42 Z" fill="#d24726"/><text x="15" y="32" text-anchor="middle" font-family="Liberation Sans" font-weight="bold" font-size="21" fill="#fff">P</text></svg><svg style="left:1589.0px;top:8.0px" width="24" height="24" viewBox="0 0 48 48" ><rect x="22" y="7" width="23" height="34" fill="#fff" stroke="#2b5797" stroke-width="1.4"/><path d="M29 13 H42" stroke="#2b5797" stroke-width="1.8"/><path d="M29 17 H42" stroke="#2b5797" stroke-width="1.8"/><path d="M29 21 H42" stroke="#2b5797" stroke-width="1.8"/><path d="M29 25 H42" stroke="#2b5797" stroke-width="1.8"/><path d="M29 29 H42" stroke="#2b5797" stroke-width="1.8"/><path d="M29 33 H42" stroke="#2b5797" stroke-width="1.8"/><path d="M29 37 H42" stroke="#2b5797" stroke-width="1.8"/><path d="M3 6 L27 2 V46 L3 42 Z" fill="#2b5797"/><text x="15" y="32" text-anchor="middle" font-family="Liberation Sans" font-weight="bold" font-size="20" fill="#fff">W</text></svg><svg style="left:1540.0px;top:8.0px" width="24" height="24" viewBox="0 0 48 48" ><rect x="2" y="2" width="44" height="44" rx="11" fill="#4a8cff"/><rect x="10" y="16" width="19" height="16" rx="3.5" fill="#fff"/><path d="M31 22 l8 -5 v14 l-8 -5 z" fill="#fff"/></svg><svg style="left:1490.5px;top:8.0px" width="24" height="24" viewBox="0 0 48 48" ><rect x="22" y="7" width="23" height="34" fill="#fff" stroke="#1e7145" stroke-width="1.4"/><g fill="#1e7145"><rect x="29" y="11" width="6" height="4"/><rect x="37" y="11" width="6" height="4"/><rect x="29" y="17" width="6" height="4"/><rect x="37" y="17" width="6" height="4"/><rect x="29" y="23" width="6" height="4"/><rect x="37" y="23" width="6" height="4"/><rect x="29" y="29" width="6" height="4"/><rect x="37" y="29" width="6" height="4"/><rect x="29" y="35" width="6" height="3"/><rect x="37" y="35" width="6" height="3"/></g><path d="M3 6 L27 2 V46 L3 42 Z" fill="#1e7145"/><text x="15" y="32" text-anchor="middle" font-family="Liberation Sans" font-weight="bold" font-size="21" fill="#fff">X</text></svg><svg style="left:1442.0px;top:8.0px" width="24" height="24" viewBox="0 0 48 48" ><rect x="6" y="3" width="38" height="42" fill="#f7f7f7" stroke="#c8c8c8" stroke-width="1"/><rect x="6" y="3" width="38" height="4" fill="#d81e1e"/><path d="M6 3 l-3 6 v34 l3 2" fill="#dcdcdc"/><path d="M12 38 q8 -6 12 -18 q2 -8 -1 -9 q-3 0 -1 8 q3 10 14 14 q5 1 4 -1 q-2 -3 -12 -1 q-9 2 -15 6 q-3 2 -1 1z" fill="none" stroke="#d01414" stroke-width="1.8"/></svg><svg style="left:1393.0px;top:8.0px" width="24" height="24" viewBox="0 0 48 48" ><rect x="8" y="2" width="32" height="44" rx="2" fill="#fff"/><rect x="12" y="6" width="24" height="8" fill="#0a1220"/><g fill="#0a1220"><rect x="12" y="18" width="6" height="5"/><rect x="21" y="18" width="6" height="5"/><rect x="30" y="18" width="6" height="5"/><rect x="12" y="26" width="6" height="5"/><rect x="21" y="26" width="6" height="5"/><rect x="30" y="26" width="6" height="5"/><rect x="12" y="34" width="6" height="5"/><rect x="21" y="34" width="6" height="5"/><rect x="30" y="34" width="6" height="5"/></g></svg><svg style="left:1344.0px;top:8.0px" width="24" height="24" viewBox="0 0 48 48" ><ellipse cx="20" cy="17" rx="19" ry="13" fill="#f6f6f8" stroke="#d8242c" stroke-width="2.6" transform="rotate(-12 20 17)"/><ellipse cx="16" cy="28" rx="13" ry="6" fill="#8f9ad8" opacity="0.75" transform="rotate(-12 16 28)"/><path d="M14 6 L30 34 M32 6 L22 32" stroke="#9aa0a6" stroke-width="2.2"/><ellipse cx="33" cy="40" rx="4.5" ry="6" fill="none" stroke="#2a9ad8" stroke-width="3" transform="rotate(-25 33 40)"/><ellipse cx="41" cy="30" rx="6" ry="4.5" fill="none" stroke="#2a9ad8" stroke-width="3" transform="rotate(-25 41 30)"/></svg><svg style="left:1295.0px;top:8.0px" width="24" height="24" viewBox="0 0 48 48" ><path d="M4 28 Q4 12 22 10 Q40 10 40 24 Q40 32 32 32 Q26 32 28 38 Q28 44 20 44 Q6 42 4 28 Z" fill="#dfe6ee" stroke="#7d8a9a" stroke-width="1.2"/><circle cx="13" cy="24" r="3.4" fill="#e8382c"/><circle cx="21" cy="17" r="3.4" fill="#f0c020"/><circle cx="31" cy="18" r="3.4" fill="#3cb044"/><circle cx="13" cy="34" r="3.4" fill="#2a7ae0"/><path d="M24 44 L38 12 L42 14 L28 46 Z" fill="#e89a3a" stroke="#8a5210" stroke-width="0.7"/><path d="M38 12 q2 -8 8 -10 q0 8 -4 12z" fill="#c8b08a" stroke="#7a6a4a" stroke-width="0.6"/></svg><svg style="left:1245.5px;top:8.0px" width="24" height="24" viewBox="0 0 48 48" ><rect x="0" y="0" width="48" height="48" fill="#1e98d8"/><g fill="none" stroke="#fff" stroke-width="1.8"><rect x="14" y="12" width="16" height="6"/><rect x="10" y="18" width="24" height="12"/><rect x="14" y="26" width="14" height="10" fill="#1e98d8"/><rect x="30" y="22" width="8" height="14" fill="#1e98d8"/></g><path d="M17 30 h8 M17 33 h8" stroke="#fff" stroke-width="1.2"/></svg><svg style="left:1197.0px;top:8.0px" width="24" height="24" viewBox="0 0 48 48" ><path d="M5 22 L42 4 L44 8 L12 24 Z" fill="#fff" stroke="#2a9ad8" stroke-width="2"/><rect x="2" y="24" width="44" height="12" rx="2" fill="#3aa6e0"/><rect x="2" y="24" width="44" height="4" rx="1" fill="#8cd0f0"/><rect x="4" y="36" width="40" height="3" fill="#1a7ab8"/></svg><svg style="left:1148.0px;top:8.0px" width="24" height="24" viewBox="0 0 48 48" ><rect x="18" y="2" width="26" height="34" rx="2" fill="#d4d7da" stroke="#7d8286" stroke-width="1"/><rect x="21" y="5" width="20" height="24" fill="#eef0f1" stroke="#9da1a5" stroke-width="0.6"/><circle cx="31" cy="16" r="8" fill="none" stroke="#5c6064" stroke-width="1.2" stroke-dasharray="2 1.4"/><circle cx="31" cy="16" r="2" fill="#5c6064"/><path d="M2 34 Q2 16 18 15 Q32 16 33 32 L34 37 Q18 44 1 38 Z" fill="#f5b91a" stroke="#c28a08" stroke-width="1"/><path d="M8 22 Q16 15 26 20" stroke="#ffe27a" stroke-width="3" fill="none"/><path d="M1 38 Q18 44 34 37 L35 40 Q18 47 0 41 Z" fill="#e09c10"/><path d="M28 28 h16 v8 q0 8 -8 11 q-8 -3 -8 -11 z" fill="#fff" stroke="#666" stroke-width="0.6"/><path d="M29 29 h7 v9 h-7z" fill="#2a6fd8"/><path d="M36 29 h7 v9 h-7z" fill="#f5b01a"/><path d="M29 38 h7 v8 q-6 -3 -7 -8z" fill="#f5b01a"/><path d="M36 38 h7 q-1 5 -7 8z" fill="#2a6fd8"/></svg><svg style="left:1098.5px;top:8.0px" width="24" height="24" viewBox="0 0 48 48" ><defs><linearGradient id="rd" x1="0" y1="0" x2="0" y2="1"><stop offset="0" stop-color="#e8414a"/><stop offset="1" stop-color="#b81420"/></linearGradient></defs><rect x="2" y="7" width="44" height="34" rx="10" fill="url(#rd)"/><path d="M18 13 h12 v9 h7 l-13 12 l-13 -12 h7 z" fill="#fff"/></svg><svg style="left:1050.0px;top:8.0px" width="24" height="24" viewBox="0 0 48 48" ><path d="M16 6 l10 -3 l8 4 v11 l-10 4 l-8 -5z" fill="#3a8ae8"/><path d="M16 6 l8 5 l10 -4 l-8 -4z" fill="#8cc4f8"/><path d="M24 11 v11 l10 -4 v-11z" fill="#1a5cc0"/><path d="M3 26 l10 -3 l8 4 v11 l-10 4 l-8 -5z" fill="#e8d020"/><path d="M3 26 l8 5 l10 -4 l-8 -4z" fill="#fff08a"/><path d="M11 31 v11 l10 -4 v-11z" fill="#b8a010"/><path d="M25 27 l10 -3 l8 4 v11 l-10 4 l-8 -5z" fill="#4ab83a"/><path d="M25 27 l8 5 l10 -4 l-8 -4z" fill="#a8e88a"/><path d="M33 32 v11 l10 -4 v-11z" fill="#2a8a20"/></svg><div class="abs" style="left:4px;top:0;width:1px;height:40px;background:#4a5560"></div><svg style="left:24px;top:11px" width="18" height="18" viewBox="0 0 18 18"><path d="M1 1 h16 v12 h-3 v4 l-4 -4 h-9z" fill="#fff"/><path d="M4 4.5h10M4 7.5h10M4 10.5h7" stroke="#05202c" stroke-width="1"/></svg>
<svg style="left:16.5px;top:19px" width="17" height="17" viewBox="0 0 17 17"><circle cx="8.5" cy="8.5" r="7.5" fill="#2a2f36" stroke="#7a8088" stroke-width="1.2"/><text x="8.5" y="13" text-anchor="middle" font-family="Liberation Sans" font-weight="bold" font-size="12" fill="#fff">1</text></svg><div class="t" style="left:58px;width:60px;text-align:center;top:5.5px;font-size:11.5px;color:#fff">23:13</div><div class="t" style="left:48px;width:80px;text-align:center;top:23px;font-size:11.5px;color:#fff">19/01/2021</div><div class="t rtl" style="left:121px;width:40px;text-align:center;top:14px;font-size:12.5px;color:#fff">עבר</div><svg style="left:166px;top:11px" width="18" height="18" viewBox="0 0 18 18"><path d="M2 14 q-1 -5 4 -5 q3 1 0 5 q-2 3 4 0" fill="none" stroke="#fff" stroke-width="1.3"/><path d="M7 12 L13 1.5 q2 -0.5 3 1.5 L10 13.5 z" fill="none" stroke="#fff" stroke-width="1.3"/></svg><svg style="left:195px;top:13px" width="16" height="15" viewBox="0 0 18 17"><path d="M1.5 5.5 h3 l4 -4 v13 l-4 -4 h-3z" fill="none" stroke="#fff" stroke-width="1.2"/><circle cx="12.5" cy="12" r="4.2" fill="#e81123"/><path d="M10.7 10.2 l3.6 3.6 M14.3 10.2 l-3.6 3.6" stroke="#fff" stroke-width="1.2"/></svg><svg style="left:218px;top:12px" width="18" height="16" viewBox="0 0 18 16"><rect x="3.5" y="1.5" width="13" height="9" fill="none" stroke="#fff" stroke-width="1.2"/><path d="M10 10.5 v3 M6 14 h8" stroke="#fff" stroke-width="1.2"/><rect x="1" y="1" width="5" height="4" fill="#05202c" stroke="#fff" stroke-width="1"/><path d="M3.5 5 v9" stroke="#fff" stroke-width="1.2"/></svg><svg style="left:245px;top:16px" width="13" height="8" viewBox="0 0 13 8"><path d="M1 7 L6.5 1.5 L12 7" fill="none" stroke="#fff" stroke-width="1.3"/></svg></div></body></html>
